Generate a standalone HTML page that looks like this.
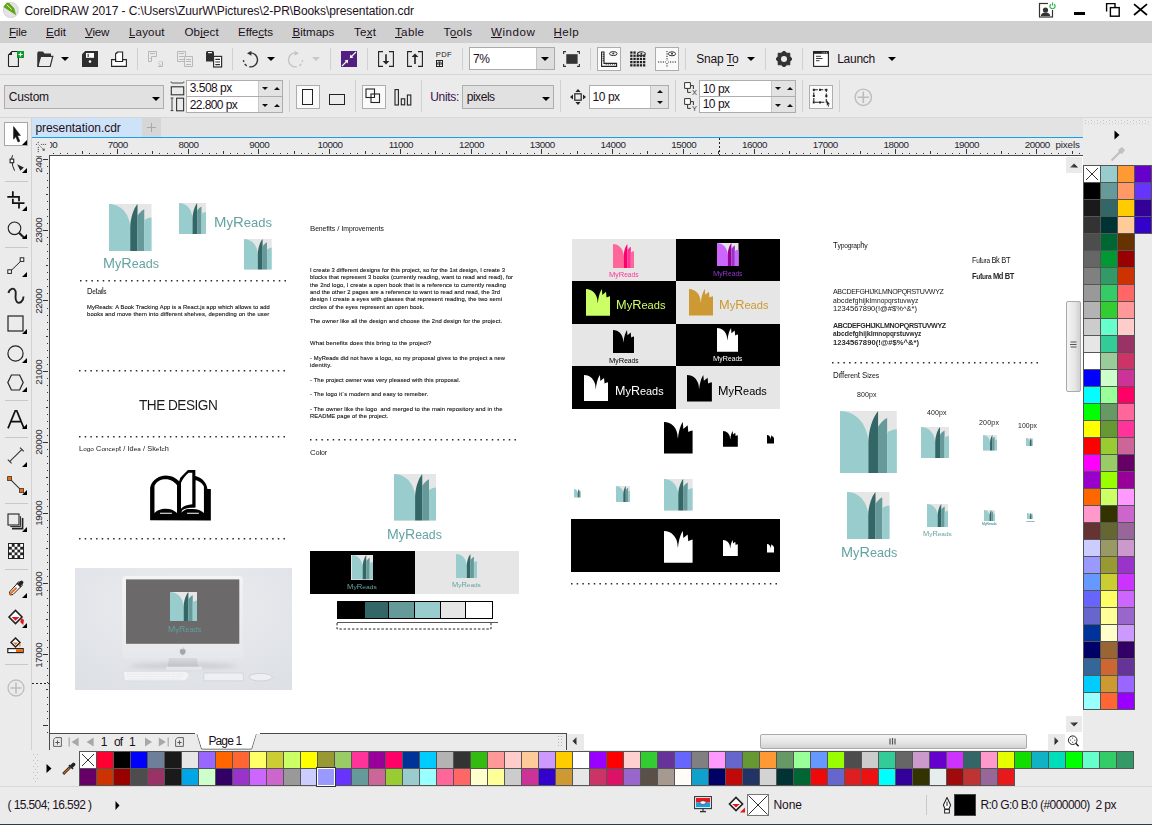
<!DOCTYPE html>
<html><head><meta charset="utf-8"><title>CorelDRAW</title>
<style>
html,body{margin:0;padding:0;}
body{width:1152px;height:825px;position:relative;overflow:hidden;background:#EBEBEB;font-family:"Liberation Sans",sans-serif;}
div,svg{box-sizing:border-box;}
</style></head><body>
<div style="position:absolute;left:0px;top:0px;width:1152px;height:21px;background:#fff;"></div>
<div style="position:absolute;left:0px;top:21px;width:1152px;height:22px;background:#D0D0D0;"></div>
<div style="position:absolute;left:0px;top:43px;width:1152px;height:31px;background:#EBEBEB;"></div>
<div style="position:absolute;left:0px;top:74px;width:1152px;height:1px;background:#D6D6D6;"></div>
<div style="position:absolute;left:0px;top:75px;width:1152px;height:42px;background:#EBEBEB;"></div>
<div style="position:absolute;left:0px;top:117px;width:1152px;height:1px;background:#D6D6D6;"></div>
<div style="position:absolute;left:0px;top:118px;width:31px;height:632px;background:#EBEBEB;"></div>
<div style="position:absolute;left:31px;top:118px;width:1px;height:668px;background:#D2D2D2;"></div>
<div style="position:absolute;left:32px;top:118px;width:1051px;height:19px;background:#E3E3E3;"></div>
<div style="position:absolute;left:32px;top:137px;width:1051px;height:1px;background:#12A1EC;"></div>
<div style="position:absolute;left:32px;top:138px;width:1051px;height:17px;background:#EBEBEB;"></div>
<div style="position:absolute;left:32px;top:155px;width:17px;height:595px;background:#EBEBEB;"></div>
<div style="position:absolute;left:49px;top:155px;width:1034px;height:1px;background:#4A4A4A;"></div>
<div style="position:absolute;left:49px;top:155px;width:1px;height:595px;background:#4A4A4A;"></div>
<div style="position:absolute;left:50px;top:156px;width:1033px;height:577px;background:#FFFFFF;"></div>
<div style="position:absolute;left:49px;top:733px;width:518px;height:1px;background:#4A4A4A;"></div>
<div style="position:absolute;left:567px;top:733px;width:516px;height:17px;background:#FFFFFF;"></div>
<div style="position:absolute;left:566px;top:733px;width:1px;height:17px;background:#4A4A4A;"></div>
<div style="position:absolute;left:50px;top:734px;width:516px;height:16px;background:#EBEBEB;"></div>
<div style="position:absolute;left:1083px;top:118px;width:69px;height:632px;background:#EBEBEB;"></div>
<div style="position:absolute;left:32px;top:750px;width:1120px;height:1px;background:#D8D8D8;"></div>
<div style="position:absolute;left:0px;top:750px;width:1152px;height:36px;background:#EBEBEB;"></div>
<div style="position:absolute;left:0px;top:786px;width:1152px;height:1px;background:#D8D8D8;"></div>
<div style="position:absolute;left:0px;top:787px;width:1152px;height:37px;background:#EBEBEB;"></div>
<div style="position:absolute;left:0px;top:824px;width:1152px;height:1px;background:#2F3B46;"></div>
<svg style="position:absolute;left:2px;top:1px;" width="18" height="18" viewBox="0 0 18 18"><circle cx="8.9" cy="9.1" r="8" fill="#D6D6D8"/><circle cx="8.9" cy="9.1" r="6.8" fill="#E4E4E6"/>
<path d="M1.3,6 L4.9,1.4 L7.2,2 L12.2,7.2 L14.2,14.2 L8.4,10.4 Z" fill="#62A514"/><path d="M4.8,3.8 L9.8,8.6" stroke="#F0F5E8" stroke-width="0.9"/></svg>
<div style="position:absolute;left:24.50px;top:4.75px;font-size:12px;line-height:1;white-space:pre;color:#1c1020;letter-spacing:-0.082px;">CorelDRAW 2017 - C:\Users\ZuurW\Pictures\2-PR\Books\presentation.cdr</div>
<svg style="position:absolute;left:1038px;top:2px;" width="18" height="17" viewBox="0 0 18 17"><rect x="1.5" y="1.5" width="13" height="13.5" fill="none" stroke="#333" stroke-width="1.2"/>
<rect x="10" y="0" width="8" height="8" fill="#fff"/>
<circle cx="7.5" cy="8" r="2.6" fill="#333"/><path d="M2.8,14 Q3,10.6 7.5,10.4 Q12,10.6 12.2,14 Z" fill="#333"/>
<path d="M12.8,2.2 A2.6,2.6 0 1 0 16.2,2.2" fill="none" stroke="#2DB04A" stroke-width="1.2"/><path d="M14.5,0.4 V3.6" stroke="#2DB04A" stroke-width="1.2"/></svg>
<div style="position:absolute;left:1074px;top:12px;width:11px;height:3px;background:#000;"></div>
<svg style="position:absolute;left:1104px;top:2px;" width="18" height="16" viewBox="0 0 18 16"><path d="M2.6,9.6 V1.6 H11 V5.5" fill="none" stroke="#000" stroke-width="1.4"/><rect x="6.4" y="5.6" width="8.8" height="8.6" fill="none" stroke="#000" stroke-width="1.4"/></svg>
<svg style="position:absolute;left:1132px;top:3px;" width="17" height="13" viewBox="0 0 17 13"><path d="M2,1.2 L15,12 M15,1.2 L2,12" stroke="#000" stroke-width="1.7"/></svg>
<div style="position:absolute;left:9.00px;top:26.19px;font-size:11.6px;line-height:1;white-space:pre;color:#1c1020;letter-spacing:-0.231px;">File</div>
<div style="position:absolute;left:9px;top:37px;width:7px;height:1px;background:#1c1020;"></div>
<div style="position:absolute;left:46.00px;top:26.19px;font-size:11.6px;line-height:1;white-space:pre;color:#1c1020;letter-spacing:0.004px;">Edit</div>
<div style="position:absolute;left:46px;top:37px;width:8px;height:1px;background:#1c1020;"></div>
<div style="position:absolute;left:85.00px;top:26.19px;font-size:11.6px;line-height:1;white-space:pre;color:#1c1020;letter-spacing:-0.145px;">View</div>
<div style="position:absolute;left:85px;top:37px;width:8px;height:1px;background:#1c1020;"></div>
<div style="position:absolute;left:129.00px;top:26.19px;font-size:11.6px;line-height:1;white-space:pre;color:#1c1020;letter-spacing:0.134px;">Layout</div>
<div style="position:absolute;left:129px;top:37px;width:6px;height:1px;background:#1c1020;"></div>
<div style="position:absolute;left:184.40px;top:26.19px;font-size:11.6px;line-height:1;white-space:pre;color:#1c1020;letter-spacing:0.175px;">Object</div>
<div style="position:absolute;left:200px;top:37px;width:5px;height:1px;background:#1c1020;"></div>
<div style="position:absolute;left:238.00px;top:26.19px;font-size:11.6px;line-height:1;white-space:pre;color:#1c1020;letter-spacing:-0.041px;">Effects</div>
<div style="position:absolute;left:258px;top:37px;width:6px;height:1px;background:#1c1020;"></div>
<div style="position:absolute;left:292.40px;top:26.19px;font-size:11.6px;line-height:1;white-space:pre;color:#1c1020;letter-spacing:0.016px;">Bitmaps</div>
<div style="position:absolute;left:292px;top:37px;width:8px;height:1px;background:#1c1020;"></div>
<div style="position:absolute;left:354.00px;top:26.19px;font-size:11.6px;line-height:1;white-space:pre;color:#1c1020;letter-spacing:0.242px;">Text</div>
<div style="position:absolute;left:366px;top:37px;width:6px;height:1px;background:#1c1020;"></div>
<div style="position:absolute;left:395.00px;top:26.19px;font-size:11.6px;line-height:1;white-space:pre;color:#1c1020;letter-spacing:0.317px;">Table</div>
<div style="position:absolute;left:395px;top:37px;width:7px;height:1px;background:#1c1020;"></div>
<div style="position:absolute;left:443.50px;top:26.19px;font-size:11.6px;line-height:1;white-space:pre;color:#1c1020;letter-spacing:0.355px;">Tools</div>
<div style="position:absolute;left:451px;top:37px;width:6px;height:1px;background:#1c1020;"></div>
<div style="position:absolute;left:491.00px;top:26.19px;font-size:11.6px;line-height:1;white-space:pre;color:#1c1020;letter-spacing:0.548px;">Window</div>
<div style="position:absolute;left:491px;top:37px;width:11px;height:1px;background:#1c1020;"></div>
<div style="position:absolute;left:553.60px;top:26.19px;font-size:11.6px;line-height:1;white-space:pre;color:#1c1020;letter-spacing:0.381px;">Help</div>
<div style="position:absolute;left:554px;top:37px;width:8px;height:1px;background:#1c1020;"></div>
<svg style="position:absolute;left:7px;top:50px;" width="18" height="18" viewBox="0 0 18 18"><path d="M1.5,16.5 V5 L5,1.5 H10.5" fill="none" stroke="#222" stroke-width="1.1"/>
<path d="M1.5,5 L5,1.5 V5 Z" fill="#222"/><path d="M11.4,8 V16.5 H1.5" fill="none" stroke="#222" stroke-width="1.1"/>
<rect x="10" y="1" width="7" height="7" fill="#0A9A2C"/><path d="M13.5,2.4 V6.6 M11.4,4.5 H15.6" stroke="#fff" stroke-width="1.2"/></svg>
<svg style="position:absolute;left:37px;top:51px;" width="17" height="16" viewBox="0 0 17 16"><path d="M0.5,15.5 V1.5 Q0.5,0.5 1.5,0.5 H6 L7.5,2.5 H14 V5 H4 Z" fill="#333"/>
<path d="M0.5,15.5 V2 H2 V15.5 Z" fill="#333"/>
<path d="M3.6,5.4 H15.8 L13.2,15.5 H0.8 Z" fill="none" stroke="#333" stroke-width="1.2"/></svg>
<svg style="position:absolute;left:61px;top:57px;" width="8" height="4" viewBox="0 0 8 4"><path d="M0,0 H8 L4.0,4 Z" fill="#000"/></svg>
<svg style="position:absolute;left:82px;top:51px;" width="16" height="16" viewBox="0 0 16 16"><path d="M0,3.2 L3.2,0 H16 V16 H0 Z" fill="#2E2E2E"/><rect x="4" y="2" width="8" height="4.8" fill="#fff"/>
<rect x="5.6" y="2.8" width="1.1" height="3.2" fill="#2E2E2E"/><circle cx="8" cy="10.6" r="1.3" fill="#fff"/></svg>
<svg style="position:absolute;left:111px;top:51px;" width="16" height="16" viewBox="0 0 16 16"><path d="M4.6,10.5 V2.8 L6.4,1 H11.6 V10.5" fill="#fff" stroke="#222" stroke-width="1.1"/>
<path d="M4.6,2.8 L6.4,1 V2.8 Z" fill="#222"/>
<path d="M0.6,8.6 H4.6 V10.5 H11.6 V8.6 H15.4 V15.4 H0.6 Z" fill="#fff" stroke="#222" stroke-width="1.1"/></svg>
<div style="position:absolute;left:137px;top:48px;width:1px;height:22px;background:#D0D0D0;"></div>
<svg style="position:absolute;left:147px;top:51px;" width="18" height="17" viewBox="0 0 18 17"><path d="M1.5,0.5 H9.5 V5.5 H4.5 V10.5 H1.5 Z" fill="none" stroke="#B8B8B8" stroke-width="1"/>
<path d="M3,2.5 H8 M3,7.5 H4" stroke="#B8B8B8" stroke-width="1"/>
<path d="M11.5,10.5 H12.5 M13.5,10.5 H14.5 M15.5,10.5 V15.5 H11 M11.5,12.5 H12.5 M12,14 H14" fill="none" stroke="#B8B8B8" stroke-width="1"/></svg>
<svg style="position:absolute;left:177px;top:51px;" width="17" height="17" viewBox="0 0 17 17"><path d="M0.5,0.5 H8.5 V10.5 H0.5 Z" fill="none" stroke="#B8B8B8" stroke-width="1"/>
<path d="M2,2.5 H7 M2,5.5 H7 M2,8.5 H7" stroke="#B8B8B8" stroke-width="1"/>
<path d="M7.5,5.5 H15.5 V15.5 H7.5 Z" fill="#EBEBEB" stroke="#B8B8B8" stroke-width="1"/>
<path d="M9,8.5 H14 M9,10.5 H14 M9,13.5 H14" stroke="#B8B8B8" stroke-width="1"/></svg>
<svg style="position:absolute;left:206px;top:51px;" width="17" height="17" viewBox="0 0 17 17"><path d="M0,1.5 Q0,0 1.5,0 H6.5 Q8,0 8,1.5 V10.6 H0 Z" fill="#2E2E2E"/><rect x="2" y="1" width="4" height="1.2" fill="#fff"/>
<rect x="7.6" y="5.4" width="8" height="10.6" fill="#fff" stroke="#2E2E2E" stroke-width="1.2"/>
<path d="M9.3,8.4 H14 M9.3,11 H14 M9.3,13.6 H14" stroke="#2E2E2E" stroke-width="1.1"/></svg>
<div style="position:absolute;left:232px;top:48px;width:1px;height:22px;background:#D0D0D0;"></div>
<svg style="position:absolute;left:241px;top:51px;" width="18" height="17" viewBox="0 0 18 17"><path d="M9.74,1.90 A7.0,7.0 0 1 1 8.28,15.79 M5.79,14.84 A7.0,7.0 0 0 1 3.77,12.92 M2.84,11.06 A7.0,7.0 0 0 1 2.50,9.14" fill="none" stroke="#333" stroke-width="1.4"/><path d="M6,2.2 L10.4,-0.2 V4.8 Z" fill="#333"/></svg>
<svg style="position:absolute;left:267px;top:57px;" width="8" height="4" viewBox="0 0 8 4"><path d="M0,0 H8 L4.0,4 Z" fill="#000"/></svg>
<svg style="position:absolute;left:287px;top:51px;" width="18" height="17" viewBox="0 0 18 17"><path d="M8.26,1.90 A7.0,7.0 0 1 0 9.72,15.79 M12.21,14.84 A7.0,7.0 0 0 0 14.23,12.92 M15.16,11.06 A7.0,7.0 0 0 0 15.50,9.14" fill="none" stroke="#C4C4C4" stroke-width="1.4"/><path d="M12,2.2 L7.6,-0.2 V4.8 Z" fill="#C4C4C4"/></svg>
<svg style="position:absolute;left:312px;top:57px;" width="8" height="4" viewBox="0 0 8 4"><path d="M0,0 H8 L4.0,4 Z" fill="#C8C8C8"/></svg>
<div style="position:absolute;left:330px;top:48px;width:1px;height:22px;background:#D0D0D0;"></div>
<svg style="position:absolute;left:341px;top:51px;" width="16" height="16" viewBox="0 0 16 16"><rect width="16" height="16" fill="#521E80"/><path d="M1,15 L6.4,9.6 M15,1 L9.6,6.4" stroke="#fff" stroke-width="1.2"/>
<path d="M7.2,8.8 L3.6,9.4 L6.6,12.4 Z M8.8,7.2 L12.4,6.6 L9.4,3.6 Z" fill="#fff"/></svg>
<div style="position:absolute;left:367px;top:48px;width:1px;height:22px;background:#D0D0D0;"></div>
<svg style="position:absolute;left:378px;top:51px;" width="16" height="16" viewBox="0 0 16 16"><path d="M5,0.6 H0.6 V15.4 H5 M11,0.6 H15.4 V15.4 H11" fill="none" stroke="#222" stroke-width="1.1"/><path d="M8,3.2 V11" stroke="#222" stroke-width="1.6"/><path d="M4.6,10 H11.4 L8,13.6 Z" fill="#222"/></svg>
<svg style="position:absolute;left:407px;top:51px;" width="16" height="16" viewBox="0 0 16 16"><path d="M5,0.6 H0.6 V15.4 H5 M11,0.6 H15.4 V15.4 H11" fill="none" stroke="#222" stroke-width="1.1"/><path d="M8,5 V13" stroke="#222" stroke-width="1.6"/><path d="M4.6,6 H11.4 L8,2.4 Z" fill="#222"/></svg>
<div style="position:absolute;left:435.80px;top:51.37px;font-size:7.6px;line-height:1;white-space:pre;color:#222;letter-spacing:0.300px;">PDF</div>
<svg style="position:absolute;left:436px;top:60px;" width="7" height="7" viewBox="0 0 7 7"><rect x="0.5" y="0.5" width="6" height="6" fill="none" stroke="#222" stroke-width="1"/><path d="M1,3.5 L3.5,1.2 L6,3.5 M3.5,2 V6.5 M0.5,4 H6.5" stroke="#222" stroke-width="0.9" fill="none"/></svg>
<div style="position:absolute;left:462px;top:48px;width:1px;height:22px;background:#D0D0D0;"></div>
<div style="position:absolute;left:469px;top:47px;width:86px;height:23px;background:#fff;border:1px solid #ABABAB;"></div>
<div style="position:absolute;left:536px;top:48px;width:18px;height:21px;background:#DEDEDE;border-left:1px solid #C4C4C4;"></div>
<svg style="position:absolute;left:541px;top:57px;" width="8" height="4" viewBox="0 0 8 4"><path d="M0,0 H8 L4.0,4 Z" fill="#000"/></svg>
<div style="position:absolute;left:473.00px;top:52.85px;font-size:12px;line-height:1;white-space:pre;color:#1c1020;letter-spacing:-0.344px;">7%</div>
<svg style="position:absolute;left:563px;top:51px;" width="17" height="16" viewBox="0 0 17 16"><path d="M0.6,3 V0.6 H3 M14,0.6 H16.4 V3 M16.4,13 V15.4 H14 M3,15.4 H0.6 V13" fill="none" stroke="#333" stroke-width="1.1"/>
<rect x="3.3" y="3.2" width="11.3" height="9.6" fill="#333"/></svg>
<div style="position:absolute;left:590px;top:48px;width:1px;height:22px;background:#D0D0D0;"></div>
<div style="position:absolute;left:597px;top:47px;width:24px;height:24px;background:#FAFAFA;border:1px solid #ADADAD;"></div>
<svg style="position:absolute;left:601px;top:51px;" width="17" height="16" viewBox="0 0 17 16"><path d="M0.6,1 H3 V12.4 H15.6 V15.4 H0.6 Z" fill="none" stroke="#222" stroke-width="1.1"/>
<path d="M3,3.5 H1.6 M3,5.6 H1.6 M3,7.7 H1.6 M3,9.8 H1.6 M5.2,12.4 V13.8 M7.3,12.4 V13.8 M9.4,12.4 V13.8 M11.5,12.4 V13.8 M13.6,12.4 V13.8" stroke="#222" stroke-width="0.8"/>
<ellipse cx="12.3" cy="2.6" rx="3.8" ry="2" fill="none" stroke="#333" stroke-width="1"/><circle cx="12.3" cy="2.6" r="1" fill="#333"/></svg>
<svg style="position:absolute;left:630px;top:51px;" width="17" height="16" viewBox="0 0 17 16"><g fill="#222"><rect x="0.2" y="0.4" width="2.3" height="2.3"/><rect x="3.4" y="0.4" width="2.3" height="2.3"/><rect x="0.2" y="3.6" width="2.3" height="2.3"/><rect x="3.4" y="3.6" width="2.3" height="2.3"/><rect x="6.6" y="3.6" width="2.3" height="2.3"/><rect x="9.8" y="3.6" width="2.3" height="2.3"/><rect x="13.0" y="3.6" width="2.3" height="2.3"/><rect x="0.2" y="6.8" width="2.3" height="2.3"/><rect x="3.4" y="6.8" width="2.3" height="2.3"/><rect x="6.6" y="6.8" width="2.3" height="2.3"/><rect x="9.8" y="6.8" width="2.3" height="2.3"/><rect x="13.0" y="6.8" width="2.3" height="2.3"/><rect x="0.2" y="10.0" width="2.3" height="2.3"/><rect x="3.4" y="10.0" width="2.3" height="2.3"/><rect x="6.6" y="10.0" width="2.3" height="2.3"/><rect x="9.8" y="10.0" width="2.3" height="2.3"/><rect x="13.0" y="10.0" width="2.3" height="2.3"/><rect x="0.2" y="13.2" width="2.3" height="2.3"/><rect x="3.4" y="13.2" width="2.3" height="2.3"/><rect x="6.6" y="13.2" width="2.3" height="2.3"/><rect x="9.8" y="13.2" width="2.3" height="2.3"/><rect x="13.0" y="13.2" width="2.3" height="2.3"/></g>
<ellipse cx="11.4" cy="2.8" rx="3.9" ry="2" fill="none" stroke="#333" stroke-width="1.1"/><circle cx="11.4" cy="2.8" r="1" fill="#333"/></svg>
<div style="position:absolute;left:655px;top:47px;width:24px;height:24px;background:#FAFAFA;border:1px solid #ADADAD;"></div>
<svg style="position:absolute;left:658px;top:51px;" width="18" height="16" viewBox="0 0 18 16"><path d="M9,0 V16" stroke="#222" stroke-width="1" stroke-dasharray="1.2,1.2"/><path d="M0,11 H18" stroke="#222" stroke-width="1" stroke-dasharray="1.2,1.2"/>
<rect x="8" y="10" width="2" height="2" fill="#fff"/>
<ellipse cx="14" cy="2.8" rx="3.6" ry="2" fill="#fff" stroke="#333" stroke-width="1"/><circle cx="14" cy="2.8" r="1" fill="#333"/></svg>
<div style="position:absolute;left:685px;top:48px;width:1px;height:22px;background:#D0D0D0;"></div>
<div style="position:absolute;left:696.30px;top:52.85px;font-size:12px;line-height:1;white-space:pre;color:#1c1020;letter-spacing:-0.220px;">Snap To</div>
<div style="position:absolute;left:727px;top:65px;width:7px;height:1px;background:#1c1020;"></div>
<svg style="position:absolute;left:747px;top:57px;" width="8" height="4" viewBox="0 0 8 4"><path d="M0,0 H8 L4.0,4 Z" fill="#000"/></svg>
<div style="position:absolute;left:765px;top:48px;width:1px;height:22px;background:#D0D0D0;"></div>
<svg style="position:absolute;left:776px;top:51px;" width="16" height="16" viewBox="0 0 16 16"><polygon points="8.00,0.00 10.37,2.27 13.66,2.34 13.73,5.63 16.00,8.00 13.73,10.37 13.66,13.66 10.37,13.73 8.00,16.00 5.63,13.73 2.34,13.66 2.27,10.37 0.00,8.00 2.27,5.63 2.34,2.34 5.63,2.27" fill="#333" stroke="#333" stroke-width="1.2" stroke-linejoin="round"/><circle cx="8" cy="8" r="3" fill="#EBEBEB"/></svg>
<div style="position:absolute;left:802px;top:48px;width:1px;height:22px;background:#D0D0D0;"></div>
<svg style="position:absolute;left:813px;top:51px;" width="16" height="16" viewBox="0 0 16 16"><rect x="0.6" y="0.6" width="14.8" height="14.8" fill="#fff" stroke="#222" stroke-width="1.1"/><rect x="0.6" y="0.6" width="14.8" height="2.2" fill="#222"/>
<circle cx="10" cy="1.7" r="0.5" fill="#fff"/><circle cx="11.8" cy="1.7" r="0.5" fill="#fff"/><circle cx="13.6" cy="1.7" r="0.5" fill="#fff"/>
<path d="M3,5.3 H8 M3,7.5 H9.5 M3,9.7 H6.5" stroke="#222" stroke-width="0.9"/></svg>
<div style="position:absolute;left:837.20px;top:52.65px;font-size:12px;line-height:1;white-space:pre;color:#1c1020;letter-spacing:-0.254px;">Launch</div>
<svg style="position:absolute;left:888px;top:57px;" width="8" height="4" viewBox="0 0 8 4"><path d="M0,0 H8 L4.0,4 Z" fill="#000"/></svg>
<div style="position:absolute;left:4px;top:85px;width:160px;height:24px;background:#E1E1E1;border:1px solid #ADADAD;"></div>
<div style="position:absolute;left:8.80px;top:91.15px;font-size:12px;line-height:1;white-space:pre;color:#1c1020;letter-spacing:-0.209px;">Custom</div>
<svg style="position:absolute;left:152px;top:97px;" width="8" height="4" viewBox="0 0 8 4"><path d="M0,0 H8 L4.0,4 Z" fill="#000"/></svg>
<svg style="position:absolute;left:170px;top:81px;" width="15" height="31" viewBox="0 0 15 31"><path d="M1.8,2 H13.2" stroke="#333" stroke-width="0.9"/><path d="M1.2,2 V0.6 M13.8,2 V0.6" stroke="#333" stroke-width="0.9"/>
<rect x="1.3" y="5.8" width="12.4" height="8" fill="none" stroke="#333" stroke-width="1.1"/>
<path d="M2,17 V29.6" stroke="#333" stroke-width="0.9"/><path d="M0.6,17 H3.4 M0.6,29.6 H3.4" stroke="#333" stroke-width="0.9"/>
<rect x="6.6" y="17.2" width="7" height="12.6" fill="none" stroke="#333" stroke-width="1.1"/></svg>
<div style="position:absolute;left:186px;top:80px;width:97px;height:33px;background:#fff;border:1px solid #ADADAD;"></div>
<div style="position:absolute;left:258px;top:81px;width:24px;height:31px;background:#E3E3E3;border-left:1px solid #C8C8C8;"></div>
<div style="position:absolute;left:186px;top:96px;width:97px;height:1px;background:#ADADAD;"></div>
<div style="position:absolute;left:189.70px;top:82.45px;font-size:12px;line-height:1;white-space:pre;color:#1c1020;letter-spacing:-0.491px;">3.508 px</div>
<div style="position:absolute;left:189.70px;top:98.55px;font-size:12px;line-height:1;white-space:pre;color:#1c1020;letter-spacing:-0.576px;">22.800 px</div>
<svg style="position:absolute;left:262px;top:87px;" width="6" height="3" viewBox="0 0 6 3"><path d="M0,0 H6 L3,3 Z" fill="#111"/></svg>
<svg style="position:absolute;left:274px;top:87px;" width="6" height="3" viewBox="0 0 6 3"><path d="M0,3 H6 L3,0 Z" fill="#111"/></svg>
<svg style="position:absolute;left:262px;top:104px;" width="6" height="3" viewBox="0 0 6 3"><path d="M0,0 H6 L3,3 Z" fill="#111"/></svg>
<svg style="position:absolute;left:274px;top:104px;" width="6" height="3" viewBox="0 0 6 3"><path d="M0,3 H6 L3,0 Z" fill="#111"/></svg>
<div style="position:absolute;left:289px;top:80px;width:1px;height:32px;background:#D0D0D0;"></div>
<div style="position:absolute;left:296px;top:85px;width:24px;height:24px;background:#FAFAFA;border:1px solid #ADADAD;"></div>
<div style="position:absolute;left:302px;top:89px;width:11px;height:16px;background:none;border:1.2px solid #222;"></div>
<div style="position:absolute;left:329px;top:94px;width:16px;height:11px;background:none;border:1.2px solid #222;"></div>
<div style="position:absolute;left:355px;top:80px;width:1px;height:32px;background:#D0D0D0;"></div>
<div style="position:absolute;left:362px;top:85px;width:24px;height:24px;background:#FAFAFA;border:1px solid #ADADAD;"></div>
<svg style="position:absolute;left:365px;top:88px;" width="17" height="17" viewBox="0 0 17 17"><rect x="1" y="1" width="8.5" height="8.5" fill="none" stroke="#222" stroke-width="1.1"/><rect x="6" y="6" width="8.5" height="8.5" fill="#FAFAFA" stroke="#222" stroke-width="1.1"/>
<path d="M9.5,6 V9.5 H6" fill="none" stroke="#222" stroke-width="1.1"/></svg>
<svg style="position:absolute;left:394px;top:89px;" width="18" height="17" viewBox="0 0 18 17"><rect x="1" y="0.6" width="3.4" height="15.4" fill="none" stroke="#222" stroke-width="1.1"/><rect x="7.3" y="9.8" width="3.4" height="6" fill="none" stroke="#222" stroke-width="1.1"/><rect x="13.4" y="6" width="3.4" height="10" fill="none" stroke="#222" stroke-width="1.1"/></svg>
<div style="position:absolute;left:421px;top:80px;width:1px;height:32px;background:#D0D0D0;"></div>
<div style="position:absolute;left:430.20px;top:90.65px;font-size:12px;line-height:1;white-space:pre;color:#3a1050;letter-spacing:-0.295px;">Units:</div>
<div style="position:absolute;left:462px;top:85px;width:92px;height:24px;background:#E1E1E1;border:1px solid #ADADAD;"></div>
<div style="position:absolute;left:466.70px;top:90.65px;font-size:12px;line-height:1;white-space:pre;color:#1c1020;letter-spacing:-0.456px;">pixels</div>
<svg style="position:absolute;left:542px;top:97px;" width="8" height="4" viewBox="0 0 8 4"><path d="M0,0 H8 L4.0,4 Z" fill="#000"/></svg>
<div style="position:absolute;left:560px;top:80px;width:1px;height:32px;background:#D0D0D0;"></div>
<svg style="position:absolute;left:570px;top:89px;" width="16" height="16" viewBox="0 0 16 16"><path d="M8,0 L10.6,3 H5.4 Z M8,16 L10.6,13 H5.4 Z M0,8 L3,5.4 V10.6 Z M16,8 L13,5.4 V10.6 Z" fill="#222"/>
<rect x="4.8" y="4.8" width="6.4" height="6.4" fill="none" stroke="#222" stroke-width="1.2"/></svg>
<div style="position:absolute;left:589px;top:85px;width:80px;height:24px;background:#fff;border:1px solid #ADADAD;"></div>
<div style="position:absolute;left:650px;top:86px;width:18px;height:22px;background:#E3E3E3;border-left:1px solid #C8C8C8;"></div>
<div style="position:absolute;left:592.60px;top:90.85px;font-size:12px;line-height:1;white-space:pre;color:#1c1020;letter-spacing:-0.464px;">10 px</div>
<svg style="position:absolute;left:657px;top:90px;" width="6" height="3" viewBox="0 0 6 3"><path d="M0,3 H6 L3,0 Z" fill="#111"/></svg>
<svg style="position:absolute;left:657px;top:101px;" width="6" height="3" viewBox="0 0 6 3"><path d="M0,0 H6 L3,3 Z" fill="#111"/></svg>
<div style="position:absolute;left:675px;top:80px;width:1px;height:32px;background:#D0D0D0;"></div>
<svg style="position:absolute;left:684px;top:82px;" width="14" height="14" viewBox="0 0 14 14"><path d="M0.6,0.6 H6.4 V6.4 H0.6 Z" fill="#fff" stroke="#333" stroke-width="1"/><path d="M6.4,3.6 H9.4 V7 M3.6,6.4 V10.4 H6.8" fill="none" stroke="#333" stroke-width="1"/></svg>
<div style="position:absolute;left:692.00px;top:88.86px;font-size:7.5px;line-height:1;white-space:pre;color:#333;">X</div>
<svg style="position:absolute;left:684px;top:98px;" width="14" height="14" viewBox="0 0 14 14"><path d="M0.6,0.6 H6.4 V6.4 H0.6 Z" fill="#fff" stroke="#333" stroke-width="1"/><path d="M6.4,3.6 H9.4 V7 M3.6,6.4 V10.4 H6.8" fill="none" stroke="#333" stroke-width="1"/></svg>
<div style="position:absolute;left:692.00px;top:104.86px;font-size:7.5px;line-height:1;white-space:pre;color:#333;">Y</div>
<div style="position:absolute;left:699px;top:80px;width:97px;height:33px;background:#fff;border:1px solid #ADADAD;"></div>
<div style="position:absolute;left:771px;top:81px;width:24px;height:31px;background:#E3E3E3;border-left:1px solid #C8C8C8;"></div>
<div style="position:absolute;left:699px;top:96px;width:97px;height:1px;background:#ADADAD;"></div>
<div style="position:absolute;left:702.70px;top:82.65px;font-size:12px;line-height:1;white-space:pre;color:#1c1020;letter-spacing:-0.489px;">10 px</div>
<div style="position:absolute;left:702.70px;top:98.45px;font-size:12px;line-height:1;white-space:pre;color:#1c1020;letter-spacing:-0.489px;">10 px</div>
<svg style="position:absolute;left:775px;top:87px;" width="6" height="3" viewBox="0 0 6 3"><path d="M0,0 H6 L3,3 Z" fill="#111"/></svg>
<svg style="position:absolute;left:787px;top:87px;" width="6" height="3" viewBox="0 0 6 3"><path d="M0,3 H6 L3,0 Z" fill="#111"/></svg>
<svg style="position:absolute;left:775px;top:104px;" width="6" height="3" viewBox="0 0 6 3"><path d="M0,0 H6 L3,3 Z" fill="#111"/></svg>
<svg style="position:absolute;left:787px;top:104px;" width="6" height="3" viewBox="0 0 6 3"><path d="M0,3 H6 L3,0 Z" fill="#111"/></svg>
<div style="position:absolute;left:802px;top:80px;width:1px;height:32px;background:#D0D0D0;"></div>
<div style="position:absolute;left:809px;top:85px;width:24px;height:24px;background:#FAFAFA;border:1px solid #ADADAD;"></div>
<svg style="position:absolute;left:812px;top:88px;" width="18" height="19" viewBox="0 0 18 19"><rect x="1.8" y="1.8" width="12.5" height="12.5" fill="none" stroke="#222" stroke-width="1.1" stroke-dasharray="4,1.4"/>
<g fill="#222"><rect x="0.8" y="0.8" width="2" height="2"/><rect x="7" y="0.8" width="2" height="2"/><rect x="13.4" y="0.8" width="2" height="2"/><rect x="0.8" y="7" width="2" height="2"/><rect x="13.4" y="7" width="2" height="2"/><rect x="0.8" y="13.4" width="2" height="2"/><rect x="7" y="13.4" width="2" height="2"/></g>
<path d="M14.8,12.4 L18,16.2 L16.4,16.2 L17,18.4 L16,18.6 L15.4,16.6 L14.8,17.6 Z" fill="#222"/></svg>
<div style="position:absolute;left:839px;top:80px;width:1px;height:32px;background:#D0D0D0;"></div>
<svg style="position:absolute;left:854px;top:88px;" width="19" height="19" viewBox="0 0 19 19"><circle cx="9.3" cy="9.3" r="8.2" fill="none" stroke="#BDBDBD" stroke-width="1.4"/><path d="M9.3,3.6 V15 M3.6,9.3 H15" stroke="#BDBDBD" stroke-width="1.6"/></svg>
<div style="position:absolute;left:32px;top:118px;width:110px;height:19px;background:#CFE3F8;"></div>
<div style="position:absolute;left:35.40px;top:121.65px;font-size:12px;line-height:1;white-space:pre;color:#1c1020;letter-spacing:-0.044px;">presentation.cdr</div>
<div style="position:absolute;left:142px;top:118px;width:19px;height:19px;background:#D6D6D6;"></div>
<div style="position:absolute;left:151px;top:123px;width:1px;height:9px;background:#A8A8A8;"></div>
<div style="position:absolute;left:147px;top:127px;width:9px;height:1px;background:#A8A8A8;"></div>
<div style="position:absolute;left:53px;top:153px;width:1px;height:1px;background:#333;"></div>
<div style="position:absolute;left:60px;top:153px;width:1px;height:1px;background:#333;"></div>
<div style="position:absolute;left:67px;top:153px;width:1px;height:1px;background:#333;"></div>
<div style="position:absolute;left:75px;top:153px;width:1px;height:1px;background:#333;"></div>
<div style="position:absolute;left:82px;top:151px;width:1px;height:3px;background:#333;"></div>
<div style="position:absolute;left:89px;top:153px;width:1px;height:1px;background:#333;"></div>
<div style="position:absolute;left:96px;top:153px;width:1px;height:1px;background:#333;"></div>
<div style="position:absolute;left:103px;top:153px;width:1px;height:1px;background:#333;"></div>
<div style="position:absolute;left:110px;top:153px;width:1px;height:1px;background:#333;"></div>
<div style="position:absolute;left:117px;top:149px;width:1px;height:5px;background:#333;"></div>
<div style="position:absolute;left:124px;top:153px;width:1px;height:1px;background:#333;"></div>
<div style="position:absolute;left:131px;top:153px;width:1px;height:1px;background:#333;"></div>
<div style="position:absolute;left:138px;top:153px;width:1px;height:1px;background:#333;"></div>
<div style="position:absolute;left:145px;top:153px;width:1px;height:1px;background:#333;"></div>
<div style="position:absolute;left:152px;top:151px;width:1px;height:3px;background:#333;"></div>
<div style="position:absolute;left:159px;top:153px;width:1px;height:1px;background:#333;"></div>
<div style="position:absolute;left:167px;top:153px;width:1px;height:1px;background:#333;"></div>
<div style="position:absolute;left:174px;top:153px;width:1px;height:1px;background:#333;"></div>
<div style="position:absolute;left:181px;top:153px;width:1px;height:1px;background:#333;"></div>
<div style="position:absolute;left:188px;top:149px;width:1px;height:5px;background:#333;"></div>
<div style="position:absolute;left:195px;top:153px;width:1px;height:1px;background:#333;"></div>
<div style="position:absolute;left:202px;top:153px;width:1px;height:1px;background:#333;"></div>
<div style="position:absolute;left:209px;top:153px;width:1px;height:1px;background:#333;"></div>
<div style="position:absolute;left:216px;top:153px;width:1px;height:1px;background:#333;"></div>
<div style="position:absolute;left:223px;top:151px;width:1px;height:3px;background:#333;"></div>
<div style="position:absolute;left:230px;top:153px;width:1px;height:1px;background:#333;"></div>
<div style="position:absolute;left:237px;top:153px;width:1px;height:1px;background:#333;"></div>
<div style="position:absolute;left:244px;top:153px;width:1px;height:1px;background:#333;"></div>
<div style="position:absolute;left:251px;top:153px;width:1px;height:1px;background:#333;"></div>
<div style="position:absolute;left:258px;top:149px;width:1px;height:5px;background:#333;"></div>
<div style="position:absolute;left:266px;top:153px;width:1px;height:1px;background:#333;"></div>
<div style="position:absolute;left:273px;top:153px;width:1px;height:1px;background:#333;"></div>
<div style="position:absolute;left:280px;top:153px;width:1px;height:1px;background:#333;"></div>
<div style="position:absolute;left:287px;top:153px;width:1px;height:1px;background:#333;"></div>
<div style="position:absolute;left:294px;top:151px;width:1px;height:3px;background:#333;"></div>
<div style="position:absolute;left:301px;top:153px;width:1px;height:1px;background:#333;"></div>
<div style="position:absolute;left:308px;top:153px;width:1px;height:1px;background:#333;"></div>
<div style="position:absolute;left:315px;top:153px;width:1px;height:1px;background:#333;"></div>
<div style="position:absolute;left:322px;top:153px;width:1px;height:1px;background:#333;"></div>
<div style="position:absolute;left:329px;top:149px;width:1px;height:5px;background:#333;"></div>
<div style="position:absolute;left:336px;top:153px;width:1px;height:1px;background:#333;"></div>
<div style="position:absolute;left:343px;top:153px;width:1px;height:1px;background:#333;"></div>
<div style="position:absolute;left:350px;top:153px;width:1px;height:1px;background:#333;"></div>
<div style="position:absolute;left:357px;top:153px;width:1px;height:1px;background:#333;"></div>
<div style="position:absolute;left:365px;top:151px;width:1px;height:3px;background:#333;"></div>
<div style="position:absolute;left:372px;top:153px;width:1px;height:1px;background:#333;"></div>
<div style="position:absolute;left:379px;top:153px;width:1px;height:1px;background:#333;"></div>
<div style="position:absolute;left:386px;top:153px;width:1px;height:1px;background:#333;"></div>
<div style="position:absolute;left:393px;top:153px;width:1px;height:1px;background:#333;"></div>
<div style="position:absolute;left:400px;top:149px;width:1px;height:5px;background:#333;"></div>
<div style="position:absolute;left:407px;top:153px;width:1px;height:1px;background:#333;"></div>
<div style="position:absolute;left:414px;top:153px;width:1px;height:1px;background:#333;"></div>
<div style="position:absolute;left:421px;top:153px;width:1px;height:1px;background:#333;"></div>
<div style="position:absolute;left:428px;top:153px;width:1px;height:1px;background:#333;"></div>
<div style="position:absolute;left:435px;top:151px;width:1px;height:3px;background:#333;"></div>
<div style="position:absolute;left:442px;top:153px;width:1px;height:1px;background:#333;"></div>
<div style="position:absolute;left:449px;top:153px;width:1px;height:1px;background:#333;"></div>
<div style="position:absolute;left:457px;top:153px;width:1px;height:1px;background:#333;"></div>
<div style="position:absolute;left:464px;top:153px;width:1px;height:1px;background:#333;"></div>
<div style="position:absolute;left:471px;top:149px;width:1px;height:5px;background:#333;"></div>
<div style="position:absolute;left:478px;top:153px;width:1px;height:1px;background:#333;"></div>
<div style="position:absolute;left:485px;top:153px;width:1px;height:1px;background:#333;"></div>
<div style="position:absolute;left:492px;top:153px;width:1px;height:1px;background:#333;"></div>
<div style="position:absolute;left:499px;top:153px;width:1px;height:1px;background:#333;"></div>
<div style="position:absolute;left:506px;top:151px;width:1px;height:3px;background:#333;"></div>
<div style="position:absolute;left:513px;top:153px;width:1px;height:1px;background:#333;"></div>
<div style="position:absolute;left:520px;top:153px;width:1px;height:1px;background:#333;"></div>
<div style="position:absolute;left:527px;top:153px;width:1px;height:1px;background:#333;"></div>
<div style="position:absolute;left:534px;top:153px;width:1px;height:1px;background:#333;"></div>
<div style="position:absolute;left:541px;top:149px;width:1px;height:5px;background:#333;"></div>
<div style="position:absolute;left:548px;top:153px;width:1px;height:1px;background:#333;"></div>
<div style="position:absolute;left:556px;top:153px;width:1px;height:1px;background:#333;"></div>
<div style="position:absolute;left:563px;top:153px;width:1px;height:1px;background:#333;"></div>
<div style="position:absolute;left:570px;top:153px;width:1px;height:1px;background:#333;"></div>
<div style="position:absolute;left:577px;top:151px;width:1px;height:3px;background:#333;"></div>
<div style="position:absolute;left:584px;top:153px;width:1px;height:1px;background:#333;"></div>
<div style="position:absolute;left:591px;top:153px;width:1px;height:1px;background:#333;"></div>
<div style="position:absolute;left:598px;top:153px;width:1px;height:1px;background:#333;"></div>
<div style="position:absolute;left:605px;top:153px;width:1px;height:1px;background:#333;"></div>
<div style="position:absolute;left:612px;top:149px;width:1px;height:5px;background:#333;"></div>
<div style="position:absolute;left:619px;top:153px;width:1px;height:1px;background:#333;"></div>
<div style="position:absolute;left:626px;top:153px;width:1px;height:1px;background:#333;"></div>
<div style="position:absolute;left:633px;top:153px;width:1px;height:1px;background:#333;"></div>
<div style="position:absolute;left:640px;top:153px;width:1px;height:1px;background:#333;"></div>
<div style="position:absolute;left:647px;top:151px;width:1px;height:3px;background:#333;"></div>
<div style="position:absolute;left:655px;top:153px;width:1px;height:1px;background:#333;"></div>
<div style="position:absolute;left:662px;top:153px;width:1px;height:1px;background:#333;"></div>
<div style="position:absolute;left:669px;top:153px;width:1px;height:1px;background:#333;"></div>
<div style="position:absolute;left:676px;top:153px;width:1px;height:1px;background:#333;"></div>
<div style="position:absolute;left:683px;top:149px;width:1px;height:5px;background:#333;"></div>
<div style="position:absolute;left:690px;top:153px;width:1px;height:1px;background:#333;"></div>
<div style="position:absolute;left:697px;top:153px;width:1px;height:1px;background:#333;"></div>
<div style="position:absolute;left:704px;top:153px;width:1px;height:1px;background:#333;"></div>
<div style="position:absolute;left:711px;top:153px;width:1px;height:1px;background:#333;"></div>
<div style="position:absolute;left:718px;top:151px;width:1px;height:3px;background:#333;"></div>
<div style="position:absolute;left:725px;top:153px;width:1px;height:1px;background:#333;"></div>
<div style="position:absolute;left:732px;top:153px;width:1px;height:1px;background:#333;"></div>
<div style="position:absolute;left:739px;top:153px;width:1px;height:1px;background:#333;"></div>
<div style="position:absolute;left:746px;top:153px;width:1px;height:1px;background:#333;"></div>
<div style="position:absolute;left:754px;top:149px;width:1px;height:5px;background:#333;"></div>
<div style="position:absolute;left:761px;top:153px;width:1px;height:1px;background:#333;"></div>
<div style="position:absolute;left:768px;top:153px;width:1px;height:1px;background:#333;"></div>
<div style="position:absolute;left:775px;top:153px;width:1px;height:1px;background:#333;"></div>
<div style="position:absolute;left:782px;top:153px;width:1px;height:1px;background:#333;"></div>
<div style="position:absolute;left:789px;top:151px;width:1px;height:3px;background:#333;"></div>
<div style="position:absolute;left:796px;top:153px;width:1px;height:1px;background:#333;"></div>
<div style="position:absolute;left:803px;top:153px;width:1px;height:1px;background:#333;"></div>
<div style="position:absolute;left:810px;top:153px;width:1px;height:1px;background:#333;"></div>
<div style="position:absolute;left:817px;top:153px;width:1px;height:1px;background:#333;"></div>
<div style="position:absolute;left:824px;top:149px;width:1px;height:5px;background:#333;"></div>
<div style="position:absolute;left:831px;top:153px;width:1px;height:1px;background:#333;"></div>
<div style="position:absolute;left:838px;top:153px;width:1px;height:1px;background:#333;"></div>
<div style="position:absolute;left:846px;top:153px;width:1px;height:1px;background:#333;"></div>
<div style="position:absolute;left:853px;top:153px;width:1px;height:1px;background:#333;"></div>
<div style="position:absolute;left:860px;top:151px;width:1px;height:3px;background:#333;"></div>
<div style="position:absolute;left:867px;top:153px;width:1px;height:1px;background:#333;"></div>
<div style="position:absolute;left:874px;top:153px;width:1px;height:1px;background:#333;"></div>
<div style="position:absolute;left:881px;top:153px;width:1px;height:1px;background:#333;"></div>
<div style="position:absolute;left:888px;top:153px;width:1px;height:1px;background:#333;"></div>
<div style="position:absolute;left:895px;top:149px;width:1px;height:5px;background:#333;"></div>
<div style="position:absolute;left:902px;top:153px;width:1px;height:1px;background:#333;"></div>
<div style="position:absolute;left:909px;top:153px;width:1px;height:1px;background:#333;"></div>
<div style="position:absolute;left:916px;top:153px;width:1px;height:1px;background:#333;"></div>
<div style="position:absolute;left:923px;top:153px;width:1px;height:1px;background:#333;"></div>
<div style="position:absolute;left:930px;top:151px;width:1px;height:3px;background:#333;"></div>
<div style="position:absolute;left:937px;top:153px;width:1px;height:1px;background:#333;"></div>
<div style="position:absolute;left:945px;top:153px;width:1px;height:1px;background:#333;"></div>
<div style="position:absolute;left:952px;top:153px;width:1px;height:1px;background:#333;"></div>
<div style="position:absolute;left:959px;top:153px;width:1px;height:1px;background:#333;"></div>
<div style="position:absolute;left:966px;top:149px;width:1px;height:5px;background:#333;"></div>
<div style="position:absolute;left:973px;top:153px;width:1px;height:1px;background:#333;"></div>
<div style="position:absolute;left:980px;top:153px;width:1px;height:1px;background:#333;"></div>
<div style="position:absolute;left:987px;top:153px;width:1px;height:1px;background:#333;"></div>
<div style="position:absolute;left:994px;top:153px;width:1px;height:1px;background:#333;"></div>
<div style="position:absolute;left:1001px;top:151px;width:1px;height:3px;background:#333;"></div>
<div style="position:absolute;left:1008px;top:153px;width:1px;height:1px;background:#333;"></div>
<div style="position:absolute;left:1015px;top:153px;width:1px;height:1px;background:#333;"></div>
<div style="position:absolute;left:1022px;top:153px;width:1px;height:1px;background:#333;"></div>
<div style="position:absolute;left:1029px;top:153px;width:1px;height:1px;background:#333;"></div>
<div style="position:absolute;left:1036px;top:149px;width:1px;height:5px;background:#333;"></div>
<div style="position:absolute;left:1044px;top:153px;width:1px;height:1px;background:#333;"></div>
<div style="position:absolute;left:1051px;top:153px;width:1px;height:1px;background:#333;"></div>
<div style="position:absolute;left:1058px;top:153px;width:1px;height:1px;background:#333;"></div>
<div style="position:absolute;left:1065px;top:153px;width:1px;height:1px;background:#333;"></div>
<div style="position:absolute;left:1072px;top:151px;width:1px;height:3px;background:#333;"></div>
<div style="position:absolute;left:1079px;top:153px;width:1px;height:1px;background:#333;"></div>
<div style="position:absolute;left:50px;top:138px;width:1033px;height:17px;overflow:hidden;"><div style="position:absolute;left:-12.86px;top:1.71px;font-size:9.8px;line-height:1;letter-spacing:-0.45px;color:#23272E;">6000</div><div style="position:absolute;left:57.87px;top:1.71px;font-size:9.8px;line-height:1;letter-spacing:-0.45px;color:#23272E;">7000</div><div style="position:absolute;left:128.60px;top:1.71px;font-size:9.8px;line-height:1;letter-spacing:-0.45px;color:#23272E;">8000</div><div style="position:absolute;left:199.33px;top:1.71px;font-size:9.8px;line-height:1;letter-spacing:-0.45px;color:#23272E;">9000</div><div style="position:absolute;left:267.56px;top:1.71px;font-size:9.8px;line-height:1;letter-spacing:-0.45px;color:#23272E;">10000</div><div style="position:absolute;left:338.66px;top:1.71px;font-size:9.8px;line-height:1;letter-spacing:-0.45px;color:#23272E;">11000</div><div style="position:absolute;left:409.02px;top:1.71px;font-size:9.8px;line-height:1;letter-spacing:-0.45px;color:#23272E;">12000</div><div style="position:absolute;left:479.75px;top:1.71px;font-size:9.8px;line-height:1;letter-spacing:-0.45px;color:#23272E;">13000</div><div style="position:absolute;left:550.48px;top:1.71px;font-size:9.8px;line-height:1;letter-spacing:-0.45px;color:#23272E;">14000</div><div style="position:absolute;left:621.21px;top:1.71px;font-size:9.8px;line-height:1;letter-spacing:-0.45px;color:#23272E;">15000</div><div style="position:absolute;left:691.94px;top:1.71px;font-size:9.8px;line-height:1;letter-spacing:-0.45px;color:#23272E;">16000</div><div style="position:absolute;left:762.67px;top:1.71px;font-size:9.8px;line-height:1;letter-spacing:-0.45px;color:#23272E;">17000</div><div style="position:absolute;left:833.40px;top:1.71px;font-size:9.8px;line-height:1;letter-spacing:-0.45px;color:#23272E;">18000</div><div style="position:absolute;left:904.13px;top:1.71px;font-size:9.8px;line-height:1;letter-spacing:-0.45px;color:#23272E;">19000</div><div style="position:absolute;left:974.86px;top:1.71px;font-size:9.8px;line-height:1;letter-spacing:-0.45px;color:#23272E;">20000</div><div style="position:absolute;left:1005.40px;top:1.71px;font-size:9.8px;line-height:1;color:#23272E;letter-spacing:-0.1px;">pixels</div></div>
<svg style="position:absolute;left:719px;top:138px;" width="1" height="17" viewBox="0 0 1 17"><path d="M0.5,0 V17" stroke="#222" stroke-width="1" stroke-dasharray="2,2"/></svg>
<div style="position:absolute;left:43px;top:159px;width:5px;height:1px;background:#333;"></div>
<div style="position:absolute;left:47px;top:166px;width:1px;height:1px;background:#333;"></div>
<div style="position:absolute;left:47px;top:173px;width:1px;height:1px;background:#333;"></div>
<div style="position:absolute;left:47px;top:180px;width:1px;height:1px;background:#333;"></div>
<div style="position:absolute;left:47px;top:187px;width:1px;height:1px;background:#333;"></div>
<div style="position:absolute;left:46px;top:194px;width:2px;height:1px;background:#333;"></div>
<div style="position:absolute;left:47px;top:201px;width:1px;height:1px;background:#333;"></div>
<div style="position:absolute;left:47px;top:209px;width:1px;height:1px;background:#333;"></div>
<div style="position:absolute;left:47px;top:216px;width:1px;height:1px;background:#333;"></div>
<div style="position:absolute;left:47px;top:223px;width:1px;height:1px;background:#333;"></div>
<div style="position:absolute;left:43px;top:230px;width:5px;height:1px;background:#333;"></div>
<div style="position:absolute;left:47px;top:237px;width:1px;height:1px;background:#333;"></div>
<div style="position:absolute;left:47px;top:244px;width:1px;height:1px;background:#333;"></div>
<div style="position:absolute;left:47px;top:251px;width:1px;height:1px;background:#333;"></div>
<div style="position:absolute;left:47px;top:258px;width:1px;height:1px;background:#333;"></div>
<div style="position:absolute;left:46px;top:265px;width:2px;height:1px;background:#333;"></div>
<div style="position:absolute;left:47px;top:272px;width:1px;height:1px;background:#333;"></div>
<div style="position:absolute;left:47px;top:279px;width:1px;height:1px;background:#333;"></div>
<div style="position:absolute;left:47px;top:286px;width:1px;height:1px;background:#333;"></div>
<div style="position:absolute;left:47px;top:293px;width:1px;height:1px;background:#333;"></div>
<div style="position:absolute;left:43px;top:300px;width:5px;height:1px;background:#333;"></div>
<div style="position:absolute;left:47px;top:308px;width:1px;height:1px;background:#333;"></div>
<div style="position:absolute;left:47px;top:315px;width:1px;height:1px;background:#333;"></div>
<div style="position:absolute;left:47px;top:322px;width:1px;height:1px;background:#333;"></div>
<div style="position:absolute;left:47px;top:329px;width:1px;height:1px;background:#333;"></div>
<div style="position:absolute;left:46px;top:336px;width:2px;height:1px;background:#333;"></div>
<div style="position:absolute;left:47px;top:343px;width:1px;height:1px;background:#333;"></div>
<div style="position:absolute;left:47px;top:350px;width:1px;height:1px;background:#333;"></div>
<div style="position:absolute;left:47px;top:357px;width:1px;height:1px;background:#333;"></div>
<div style="position:absolute;left:47px;top:364px;width:1px;height:1px;background:#333;"></div>
<div style="position:absolute;left:43px;top:371px;width:5px;height:1px;background:#333;"></div>
<div style="position:absolute;left:47px;top:378px;width:1px;height:1px;background:#333;"></div>
<div style="position:absolute;left:47px;top:385px;width:1px;height:1px;background:#333;"></div>
<div style="position:absolute;left:47px;top:392px;width:1px;height:1px;background:#333;"></div>
<div style="position:absolute;left:47px;top:400px;width:1px;height:1px;background:#333;"></div>
<div style="position:absolute;left:46px;top:407px;width:2px;height:1px;background:#333;"></div>
<div style="position:absolute;left:47px;top:414px;width:1px;height:1px;background:#333;"></div>
<div style="position:absolute;left:47px;top:421px;width:1px;height:1px;background:#333;"></div>
<div style="position:absolute;left:47px;top:428px;width:1px;height:1px;background:#333;"></div>
<div style="position:absolute;left:47px;top:435px;width:1px;height:1px;background:#333;"></div>
<div style="position:absolute;left:43px;top:442px;width:5px;height:1px;background:#333;"></div>
<div style="position:absolute;left:47px;top:449px;width:1px;height:1px;background:#333;"></div>
<div style="position:absolute;left:47px;top:456px;width:1px;height:1px;background:#333;"></div>
<div style="position:absolute;left:47px;top:463px;width:1px;height:1px;background:#333;"></div>
<div style="position:absolute;left:47px;top:470px;width:1px;height:1px;background:#333;"></div>
<div style="position:absolute;left:46px;top:477px;width:2px;height:1px;background:#333;"></div>
<div style="position:absolute;left:47px;top:484px;width:1px;height:1px;background:#333;"></div>
<div style="position:absolute;left:47px;top:491px;width:1px;height:1px;background:#333;"></div>
<div style="position:absolute;left:47px;top:499px;width:1px;height:1px;background:#333;"></div>
<div style="position:absolute;left:47px;top:506px;width:1px;height:1px;background:#333;"></div>
<div style="position:absolute;left:43px;top:513px;width:5px;height:1px;background:#333;"></div>
<div style="position:absolute;left:47px;top:520px;width:1px;height:1px;background:#333;"></div>
<div style="position:absolute;left:47px;top:527px;width:1px;height:1px;background:#333;"></div>
<div style="position:absolute;left:47px;top:534px;width:1px;height:1px;background:#333;"></div>
<div style="position:absolute;left:47px;top:541px;width:1px;height:1px;background:#333;"></div>
<div style="position:absolute;left:46px;top:548px;width:2px;height:1px;background:#333;"></div>
<div style="position:absolute;left:47px;top:555px;width:1px;height:1px;background:#333;"></div>
<div style="position:absolute;left:47px;top:562px;width:1px;height:1px;background:#333;"></div>
<div style="position:absolute;left:47px;top:569px;width:1px;height:1px;background:#333;"></div>
<div style="position:absolute;left:47px;top:576px;width:1px;height:1px;background:#333;"></div>
<div style="position:absolute;left:43px;top:583px;width:5px;height:1px;background:#333;"></div>
<div style="position:absolute;left:47px;top:590px;width:1px;height:1px;background:#333;"></div>
<div style="position:absolute;left:47px;top:598px;width:1px;height:1px;background:#333;"></div>
<div style="position:absolute;left:47px;top:605px;width:1px;height:1px;background:#333;"></div>
<div style="position:absolute;left:47px;top:612px;width:1px;height:1px;background:#333;"></div>
<div style="position:absolute;left:46px;top:619px;width:2px;height:1px;background:#333;"></div>
<div style="position:absolute;left:47px;top:626px;width:1px;height:1px;background:#333;"></div>
<div style="position:absolute;left:47px;top:633px;width:1px;height:1px;background:#333;"></div>
<div style="position:absolute;left:47px;top:640px;width:1px;height:1px;background:#333;"></div>
<div style="position:absolute;left:47px;top:647px;width:1px;height:1px;background:#333;"></div>
<div style="position:absolute;left:43px;top:654px;width:5px;height:1px;background:#333;"></div>
<div style="position:absolute;left:47px;top:661px;width:1px;height:1px;background:#333;"></div>
<div style="position:absolute;left:47px;top:668px;width:1px;height:1px;background:#333;"></div>
<div style="position:absolute;left:47px;top:675px;width:1px;height:1px;background:#333;"></div>
<div style="position:absolute;left:47px;top:682px;width:1px;height:1px;background:#333;"></div>
<div style="position:absolute;left:46px;top:689px;width:2px;height:1px;background:#333;"></div>
<div style="position:absolute;left:47px;top:697px;width:1px;height:1px;background:#333;"></div>
<div style="position:absolute;left:47px;top:704px;width:1px;height:1px;background:#333;"></div>
<div style="position:absolute;left:47px;top:711px;width:1px;height:1px;background:#333;"></div>
<div style="position:absolute;left:47px;top:718px;width:1px;height:1px;background:#333;"></div>
<div style="position:absolute;left:43px;top:725px;width:5px;height:1px;background:#333;"></div>
<div style="position:absolute;left:47px;top:732px;width:1px;height:1px;background:#333;"></div>
<div style="position:absolute;left:32px;top:156px;width:17px;height:594px;overflow:hidden;"><div style="position:absolute;left:-5.93px;top:-72.21px;width:27.45px;height:10px;font-size:9.8px;line-height:10px;letter-spacing:-0.45px;color:#23272E;transform:rotate(-90deg);transform-origin:12.73px 5px;white-space:nowrap;">25000</div><div style="position:absolute;left:-5.93px;top:-1.48px;width:27.45px;height:10px;font-size:9.8px;line-height:10px;letter-spacing:-0.45px;color:#23272E;transform:rotate(-90deg);transform-origin:12.73px 5px;white-space:nowrap;">24000</div><div style="position:absolute;left:-5.93px;top:69.25px;width:27.45px;height:10px;font-size:9.8px;line-height:10px;letter-spacing:-0.45px;color:#23272E;transform:rotate(-90deg);transform-origin:12.73px 5px;white-space:nowrap;">23000</div><div style="position:absolute;left:-5.93px;top:139.98px;width:27.45px;height:10px;font-size:9.8px;line-height:10px;letter-spacing:-0.45px;color:#23272E;transform:rotate(-90deg);transform-origin:12.73px 5px;white-space:nowrap;">22000</div><div style="position:absolute;left:-5.93px;top:210.71px;width:27.45px;height:10px;font-size:9.8px;line-height:10px;letter-spacing:-0.45px;color:#23272E;transform:rotate(-90deg);transform-origin:12.73px 5px;white-space:nowrap;">21000</div><div style="position:absolute;left:-5.93px;top:281.44px;width:27.45px;height:10px;font-size:9.8px;line-height:10px;letter-spacing:-0.45px;color:#23272E;transform:rotate(-90deg);transform-origin:12.73px 5px;white-space:nowrap;">20000</div><div style="position:absolute;left:-5.93px;top:352.17px;width:27.45px;height:10px;font-size:9.8px;line-height:10px;letter-spacing:-0.45px;color:#23272E;transform:rotate(-90deg);transform-origin:12.73px 5px;white-space:nowrap;">19000</div><div style="position:absolute;left:-5.93px;top:422.90px;width:27.45px;height:10px;font-size:9.8px;line-height:10px;letter-spacing:-0.45px;color:#23272E;transform:rotate(-90deg);transform-origin:12.73px 5px;white-space:nowrap;">18000</div><div style="position:absolute;left:-5.93px;top:493.63px;width:27.45px;height:10px;font-size:9.8px;line-height:10px;letter-spacing:-0.45px;color:#23272E;transform:rotate(-90deg);transform-origin:12.73px 5px;white-space:nowrap;">17000</div></div>
<svg style="position:absolute;left:32px;top:683px;" width="17" height="1" viewBox="0 0 17 1"><path d="M0,0.5 H17" stroke="#222" stroke-width="1" stroke-dasharray="2,2"/></svg>
<svg style="position:absolute;left:35px;top:141px;" width="12" height="12" viewBox="0 0 12 12"><g fill="#6A6A6A"><circle cx="1.5" cy="3.4" r="0.7"/><circle cx="6.5" cy="3.4" r="0.7"/><circle cx="8.5" cy="3.4" r="0.7"/><circle cx="10.5" cy="3.4" r="0.7"/>
<circle cx="3.3" cy="1.5" r="0.7"/><circle cx="3.3" cy="6.5" r="0.7"/><circle cx="3.3" cy="8.5" r="0.7"/><circle cx="3.3" cy="10.5" r="0.7"/>
<rect x="7.6" y="7.6" width="2.2" height="2.2"/></g><path d="M3.6,3.6 L8.4,8.4" stroke="#555" stroke-width="0.9" stroke-dasharray="1,0.5"/></svg>
<div style="position:absolute;left:1066px;top:157px;width:16px;height:16px;background:#EAEAEA;"></div>
<svg style="position:absolute;left:1070px;top:163px;" width="8" height="5" viewBox="0 0 8 5"><defs><linearGradient id="gu" x1="0" y1="0" x2="1" y2="0"><stop offset="0" stop-color="#666"/><stop offset="1" stop-color="#111"/></linearGradient></defs><path d="M0,4.5 L4,0.5 L8,4.5 Z" fill="url(#gu)"/></svg>
<div style="position:absolute;left:1066px;top:716px;width:16px;height:16px;background:#EAEAEA;"></div>
<svg style="position:absolute;left:1070px;top:722px;" width="8" height="5" viewBox="0 0 8 5"><defs><linearGradient id="gd" x1="0" y1="0" x2="1" y2="0"><stop offset="0" stop-color="#666"/><stop offset="1" stop-color="#111"/></linearGradient></defs><path d="M0,0.5 L4,4.5 L8,0.5 Z" fill="url(#gd)"/></svg>
<div style="position:absolute;left:1066px;top:301px;width:15px;height:91px;background:linear-gradient(90deg,#F4F4F4,#E6E6E6 60%,#D0D0D0);border:1px solid #AAAAAA;border-radius:2px;"></div>
<svg style="position:absolute;left:1069px;top:340px;" width="9" height="10" viewBox="0 0 9 10"><path d="M1.5,2 H7.5 M1,4.5 H7.5 M1.5,7 H7.5" stroke="#555" stroke-width="1.2"/></svg>
<svg style="position:absolute;left:53px;top:737px;" width="10" height="10" viewBox="0 0 10 10"><path d="M0.6,2.6 L2.6,0.6 H8.4 V9.4 H0.6 Z" fill="none" stroke="#555" stroke-width="0.9"/><path d="M4.5,3.4 V7.6 M2.4,5.5 H6.6" stroke="#555" stroke-width="1"/></svg>
<svg style="position:absolute;left:68px;top:737px;" width="12" height="10" viewBox="0 0 12 10"><rect x="0.6" y="0.5" width="1.2" height="9" fill="#A8A8A8"/><path d="M3.6,5 L10.6,0.5 V9.5 Z" fill="#A8A8A8"/></svg>
<svg style="position:absolute;left:86px;top:737px;" width="9" height="10" viewBox="0 0 9 10"><path d="M0.6,5 L7.6,0.5 V9.5 Z" fill="#A8A8A8"/></svg>
<div style="position:absolute;left:100.80px;top:735.55px;font-size:12px;line-height:1;white-space:pre;color:#1c1020;">1</div>
<div style="position:absolute;left:113.90px;top:735.55px;font-size:12px;line-height:1;white-space:pre;color:#1c1020;letter-spacing:-0.708px;">of</div>
<div style="position:absolute;left:129.00px;top:735.55px;font-size:12px;line-height:1;white-space:pre;color:#1c1020;">1</div>
<svg style="position:absolute;left:144px;top:737px;" width="9" height="10" viewBox="0 0 9 10"><path d="M8,5 L1,0.5 V9.5 Z" fill="#A8A8A8"/></svg>
<svg style="position:absolute;left:158px;top:737px;" width="12" height="10" viewBox="0 0 12 10"><rect x="9.6" y="0.5" width="1.2" height="9" fill="#A8A8A8"/><path d="M7.8,5 L0.8,0.5 V9.5 Z" fill="#A8A8A8"/></svg>
<svg style="position:absolute;left:175px;top:737px;" width="10" height="10" viewBox="0 0 10 10"><path d="M0.6,2.6 L2.6,0.6 H8.4 V9.4 H0.6 Z" fill="none" stroke="#555" stroke-width="0.9"/><path d="M4.5,3.4 V7.6 M2.4,5.5 H6.6" stroke="#555" stroke-width="1"/></svg>
<svg style="position:absolute;left:194px;top:733px;" width="66" height="17" viewBox="0 0 66 17"><path d="M0,0.5 H3 L7.6,16 H57.6 L62.2,0.5 H66" fill="none" stroke="#555" stroke-width="1"/><path d="M3.2,1 L7.8,15.5 H57.4 L62,1 Z" fill="#fff"/></svg>
<div style="position:absolute;left:195px;top:733px;width:67px;height:1px;background:#fff;"></div>
<div style="position:absolute;left:208.40px;top:734.85px;font-size:12px;line-height:1;white-space:pre;color:#1c1020;letter-spacing:-0.847px;">Page 1</div>
<div style="position:absolute;left:49px;top:733px;width:146px;height:1px;background:#4A4A4A;"></div>
<div style="position:absolute;left:260px;top:733px;width:307px;height:1px;background:#4A4A4A;"></div>
<svg style="position:absolute;left:558px;top:736px;" width="6" height="12" viewBox="0 0 6 12"><g fill="#B5B5B5"><rect x="0" y="0" width="1" height="1"/><rect x="3" y="0" width="1" height="1"/><rect x="0" y="3" width="1" height="1"/><rect x="3" y="3" width="1" height="1"/><rect x="0" y="6" width="1" height="1"/><rect x="3" y="6" width="1" height="1"/><rect x="0" y="9" width="1" height="1"/><rect x="3" y="9" width="1" height="1"/></g></svg>
<div style="position:absolute;left:567px;top:734px;width:17px;height:16px;background:#EAEAEA;"></div>
<svg style="position:absolute;left:572px;top:737px;" width="5" height="8" viewBox="0 0 5 8"><defs><linearGradient id="gl" x1="0" y1="0" x2="0" y2="1"><stop offset="0" stop-color="#555"/><stop offset="1" stop-color="#111"/></linearGradient></defs><path d="M4.5,0 L0.5,4 L4.5,8 Z" fill="url(#gl)"/></svg>
<div style="position:absolute;left:760px;top:734px;width:267px;height:15px;background:linear-gradient(180deg,#F4F4F4,#E4E4E4 60%,#D2D2D2);border:1px solid #AAAAAA;border-radius:2px;"></div>
<svg style="position:absolute;left:888px;top:737px;" width="10" height="9" viewBox="0 0 10 9"><path d="M2,1.5 V7.5 M4.5,1 V7.5 M7,1.5 V7.5" stroke="#555" stroke-width="1.2"/></svg>
<div style="position:absolute;left:1048px;top:734px;width:17px;height:16px;background:#EAEAEA;"></div>
<svg style="position:absolute;left:1054px;top:737px;" width="5" height="8" viewBox="0 0 5 8"><defs><linearGradient id="gr" x1="0" y1="0" x2="0" y2="1"><stop offset="0" stop-color="#555"/><stop offset="1" stop-color="#111"/></linearGradient></defs><path d="M0.5,0 L4.5,4 L0.5,8 Z" fill="url(#gr)"/></svg>
<svg style="position:absolute;left:1067px;top:734px;" width="14" height="14" viewBox="0 0 14 14"><circle cx="5.7" cy="6.2" r="4.3" fill="none" stroke="#222" stroke-width="1"/><path d="M8.8,9.3 L11.6,12.2" stroke="#222" stroke-width="1.5"/><g fill="#333"><rect x="5.2" y="3.6" width="1" height="1"/><rect x="5.2" y="7.8" width="1" height="1"/><rect x="3.1" y="5.7" width="1" height="1"/><rect x="7.3" y="5.7" width="1" height="1"/></g></svg>
<div style="position:absolute;left:4px;top:122px;width:24px;height:24px;background:#fff;border:1px solid #A6A6A6;"></div>
<svg style="position:absolute;left:13px;top:126px;" width="8" height="19" viewBox="0 0 8 19"><path d="M0.6,0.6 L7.4,9.4 H4.4 L6.8,15.2 L5,16 L2.8,10.6 L0.6,13.2 Z" fill="#111" stroke="#111" stroke-width="0.6" stroke-linejoin="round"/></svg>
<svg style="position:absolute;left:22px;top:140px;" width="5" height="5" viewBox="0 0 5 5"><path d="M5,0 V5 H0 Z" fill="#000"/></svg>
<svg style="position:absolute;left:8px;top:155px;" width="17" height="19" viewBox="0 0 17 19"><path d="M4.6,0.3 Q3.2,3 3.9,5.9 Q4.3,11.5 6.6,15.7" fill="none" stroke="#222" stroke-width="1"/>
<rect x="2.1" y="4.1" width="3.6" height="3.6" fill="#fff" stroke="#222" stroke-width="1.1"/>
<path d="M9.1,9.2 L15.8,12.5 L12.4,15.7 Z" fill="#222"/></svg>
<svg style="position:absolute;left:22px;top:168px;" width="5" height="5" viewBox="0 0 5 5"><path d="M5,0 V5 H0 Z" fill="#000"/></svg>
<div style="position:absolute;left:5px;top:181px;width:23px;height:1px;background:#C8C8C8;"></div>
<svg style="position:absolute;left:7px;top:190px;" width="18" height="19" viewBox="0 0 18 19"><path d="M5.85,2.2 V6.9 M1.2,6.9 H12 V10.4 M5.85,9.5 V13.1 H16.6 M12,13.1 V17.5" fill="none" stroke="#111" stroke-width="1.75" stroke-linecap="square"/></svg>
<svg style="position:absolute;left:22px;top:206px;" width="5" height="5" viewBox="0 0 5 5"><path d="M5,0 V5 H0 Z" fill="#000"/></svg>
<svg style="position:absolute;left:7px;top:220px;" width="19" height="19" viewBox="0 0 19 19"><circle cx="7.5" cy="8.3" r="6.3" fill="none" stroke="#222" stroke-width="1.1"/><path d="M12,12.8 L17.4,18" stroke="#222" stroke-width="2.2"/></svg>
<svg style="position:absolute;left:22px;top:234px;" width="5" height="5" viewBox="0 0 5 5"><path d="M5,0 V5 H0 Z" fill="#000"/></svg>
<div style="position:absolute;left:5px;top:247px;width:23px;height:1px;background:#C8C8C8;"></div>
<svg style="position:absolute;left:7px;top:257px;" width="18" height="18" viewBox="0 0 18 18"><path d="M2.8,14.8 L15.2,2.8" stroke="#222" stroke-width="1"/><rect x="0.8" y="12.8" width="3.6" height="3.6" fill="#fff" stroke="#222" stroke-width="1"/><rect x="13.2" y="0.8" width="3.6" height="3.6" fill="#fff" stroke="#222" stroke-width="1"/></svg>
<svg style="position:absolute;left:22px;top:272px;" width="5" height="5" viewBox="0 0 5 5"><path d="M5,0 V5 H0 Z" fill="#000"/></svg>
<svg style="position:absolute;left:7px;top:286px;" width="18" height="18" viewBox="0 0 18 18"><path d="M1.4,7 C2.5,2.5 7,1 8.5,5 C9.5,9 7,13 10,16 C12.5,18 16.5,15.5 16.5,10.5" fill="none" stroke="#222" stroke-width="1.9"/></svg>
<svg style="position:absolute;left:7px;top:315px;" width="17" height="17" viewBox="0 0 17 17"><rect x="1" y="1" width="15" height="15" fill="none" stroke="#222" stroke-width="1.2"/></svg>
<svg style="position:absolute;left:22px;top:329px;" width="5" height="5" viewBox="0 0 5 5"><path d="M5,0 V5 H0 Z" fill="#000"/></svg>
<svg style="position:absolute;left:7px;top:345px;" width="17" height="17" viewBox="0 0 17 17"><circle cx="8.5" cy="8.5" r="7.6" fill="none" stroke="#222" stroke-width="1.2"/></svg>
<svg style="position:absolute;left:22px;top:358px;" width="5" height="5" viewBox="0 0 5 5"><path d="M5,0 V5 H0 Z" fill="#000"/></svg>
<svg style="position:absolute;left:7px;top:374px;" width="17" height="17" viewBox="0 0 17 17"><path d="M4.4,1 H12.6 L16.2,8.5 L12.6,16 H4.4 L0.8,8.5 Z" fill="none" stroke="#222" stroke-width="1.2"/></svg>
<svg style="position:absolute;left:22px;top:387px;" width="5" height="5" viewBox="0 0 5 5"><path d="M5,0 V5 H0 Z" fill="#000"/></svg>
<div style="position:absolute;left:5px;top:400px;width:23px;height:1px;background:#C8C8C8;"></div>
<svg style="position:absolute;left:7px;top:410px;" width="18" height="19" viewBox="0 0 18 19"><path d="M1,18.4 L8.3,0.6 H9.7 L17,18.4 M4,11.6 H14" fill="none" stroke="#111" stroke-width="1.7"/></svg>
<svg style="position:absolute;left:22px;top:424px;" width="5" height="5" viewBox="0 0 5 5"><path d="M5,0 V5 H0 Z" fill="#000"/></svg>
<div style="position:absolute;left:5px;top:437px;width:23px;height:1px;background:#C8C8C8;"></div>
<svg style="position:absolute;left:7px;top:447px;" width="18" height="18" viewBox="0 0 18 18"><path d="M2.6,14.6 L15,2.4" stroke="#333" stroke-width="1.1"/><path d="M0.8,12.6 L4.6,16.4 M13,0.6 L16.8,4.4" stroke="#333" stroke-width="1.1"/></svg>
<svg style="position:absolute;left:22px;top:462px;" width="5" height="5" viewBox="0 0 5 5"><path d="M5,0 V5 H0 Z" fill="#000"/></svg>
<svg style="position:absolute;left:7px;top:476px;" width="18" height="18" viewBox="0 0 18 18"><path d="M2.6,2.6 L14.8,14.8" stroke="#333" stroke-width="1.1"/><rect x="0.6" y="0.6" width="4" height="4" fill="#F26B0A" stroke="#333" stroke-width="0.8"/><rect x="12.6" y="12.6" width="4" height="4" fill="#F26B0A" stroke="#333" stroke-width="0.8"/></svg>
<svg style="position:absolute;left:22px;top:490px;" width="5" height="5" viewBox="0 0 5 5"><path d="M5,0 V5 H0 Z" fill="#000"/></svg>
<div style="position:absolute;left:5px;top:503px;width:23px;height:1px;background:#C8C8C8;"></div>
<svg style="position:absolute;left:7px;top:513px;" width="18" height="19" viewBox="0 0 18 19"><path d="M5,15.6 H15.6 V5" fill="none" stroke="#222" stroke-width="1.6"/><path d="M3.2,13.6 H13.6 V3.2" fill="none" stroke="#222" stroke-width="1"/><rect x="1" y="1" width="11" height="11" fill="none" stroke="#222" stroke-width="1.1"/></svg>
<svg style="position:absolute;left:22px;top:527px;" width="5" height="5" viewBox="0 0 5 5"><path d="M5,0 V5 H0 Z" fill="#000"/></svg>
<svg style="position:absolute;left:8px;top:543px;" width="16" height="16" viewBox="0 0 16 16"><rect width="16" height="16" fill="#222"/><rect x="1.0" y="1.0" width="2.8" height="2.8" fill="#fff"/><rect x="6.6" y="1.0" width="2.8" height="2.8" fill="#fff"/><rect x="12.2" y="1.0" width="2.8" height="2.8" fill="#fff"/><rect x="3.8" y="3.8" width="2.8" height="2.8" fill="#fff"/><rect x="9.4" y="3.8" width="2.8" height="2.8" fill="#fff"/><rect x="1.0" y="6.6" width="2.8" height="2.8" fill="#fff"/><rect x="6.6" y="6.6" width="2.8" height="2.8" fill="#fff"/><rect x="12.2" y="6.6" width="2.8" height="2.8" fill="#fff"/><rect x="3.8" y="9.4" width="2.8" height="2.8" fill="#fff"/><rect x="9.4" y="9.4" width="2.8" height="2.8" fill="#fff"/><rect x="1.0" y="12.2" width="2.8" height="2.8" fill="#fff"/><rect x="6.6" y="12.2" width="2.8" height="2.8" fill="#fff"/><rect x="12.2" y="12.2" width="2.8" height="2.8" fill="#fff"/></svg>
<div style="position:absolute;left:5px;top:569px;width:23px;height:1px;background:#C8C8C8;"></div>
<svg style="position:absolute;left:7px;top:579px;" width="18" height="19" viewBox="0 0 18 19"><path d="M12,2.5 L15.5,6 L6,15.5 L3,16 L2.5,13 Z" fill="#fff" stroke="#222" stroke-width="1"/><path d="M2.6,15.6 L9.6,8.6" stroke="#EE6A10" stroke-width="2"/>
<path d="M11,4.5 L13.5,2 Q14.6,1 15.6,2 L16,2.4 Q17,3.4 16,4.5 L13.5,7 Z" fill="#222"/><path d="M10,4 L14,8" stroke="#222" stroke-width="1.6"/></svg>
<svg style="position:absolute;left:22px;top:593px;" width="5" height="5" viewBox="0 0 5 5"><path d="M5,0 V5 H0 Z" fill="#000"/></svg>
<svg style="position:absolute;left:7px;top:609px;" width="20" height="19" viewBox="0 0 20 19"><path d="M2,8 L8.5,1.5 L15,8 L8.5,14.5 Z" fill="#fff" stroke="#222" stroke-width="1.6"/><path d="M4.6,8 H12.4 L8.5,11.8 Z" fill="#E8141E"/><path d="M14.5,9 L17,11 L16.2,16 L13.2,13 Z" fill="#E8141E"/></svg>
<svg style="position:absolute;left:22px;top:623px;" width="5" height="5" viewBox="0 0 5 5"><path d="M5,0 V5 H0 Z" fill="#000"/></svg>
<svg style="position:absolute;left:7px;top:637px;" width="17" height="17" viewBox="0 0 17 17"><path d="M4,5.5 L8.5,1 L13,5.5 L8.5,10 Z" fill="#fff" stroke="#222" stroke-width="1.5"/><path d="M6,5.5 H11 L8.5,8 Z" fill="#EE6A10"/><rect x="12.4" y="6.6" width="1" height="3" fill="#EE6A10"/>
<rect x="0.8" y="11.6" width="15.4" height="4" fill="#fff" stroke="#222" stroke-width="1.2"/><rect x="9" y="12.2" width="6.8" height="2.8" fill="#EE6A10"/></svg>
<div style="position:absolute;left:5px;top:664px;width:23px;height:1px;background:#C8C8C8;"></div>
<svg style="position:absolute;left:7px;top:679px;" width="18" height="18" viewBox="0 0 18 18"><circle cx="9" cy="9" r="8" fill="none" stroke="#BDBDBD" stroke-width="1.3"/><path d="M9,3.4 V14.6 M3.4,9 H14.6" stroke="#BDBDBD" stroke-width="1.6"/></svg>
<svg style="position:absolute;left:1085px;top:120px;" width="66" height="5" viewBox="0 0 66 5"><g fill="#C4C4C4"><rect x="0" y="0.0" width="1" height="1"/><rect x="3" y="1.5" width="1" height="1"/><rect x="6" y="0.0" width="1" height="1"/><rect x="9" y="1.5" width="1" height="1"/><rect x="12" y="0.0" width="1" height="1"/><rect x="15" y="1.5" width="1" height="1"/><rect x="18" y="0.0" width="1" height="1"/><rect x="21" y="1.5" width="1" height="1"/><rect x="24" y="0.0" width="1" height="1"/><rect x="27" y="1.5" width="1" height="1"/><rect x="30" y="0.0" width="1" height="1"/><rect x="33" y="1.5" width="1" height="1"/><rect x="36" y="0.0" width="1" height="1"/><rect x="39" y="1.5" width="1" height="1"/><rect x="42" y="0.0" width="1" height="1"/><rect x="45" y="1.5" width="1" height="1"/><rect x="48" y="0.0" width="1" height="1"/><rect x="51" y="1.5" width="1" height="1"/><rect x="54" y="0.0" width="1" height="1"/><rect x="57" y="1.5" width="1" height="1"/><rect x="60" y="0.0" width="1" height="1"/><rect x="63" y="1.5" width="1" height="1"/><rect x="0" y="3.0" width="1" height="1"/><rect x="3" y="4.5" width="1" height="1"/><rect x="6" y="3.0" width="1" height="1"/><rect x="9" y="4.5" width="1" height="1"/><rect x="12" y="3.0" width="1" height="1"/><rect x="15" y="4.5" width="1" height="1"/><rect x="18" y="3.0" width="1" height="1"/><rect x="21" y="4.5" width="1" height="1"/><rect x="24" y="3.0" width="1" height="1"/><rect x="27" y="4.5" width="1" height="1"/><rect x="30" y="3.0" width="1" height="1"/><rect x="33" y="4.5" width="1" height="1"/><rect x="36" y="3.0" width="1" height="1"/><rect x="39" y="4.5" width="1" height="1"/><rect x="42" y="3.0" width="1" height="1"/><rect x="45" y="4.5" width="1" height="1"/><rect x="48" y="3.0" width="1" height="1"/><rect x="51" y="4.5" width="1" height="1"/><rect x="54" y="3.0" width="1" height="1"/><rect x="57" y="4.5" width="1" height="1"/><rect x="60" y="3.0" width="1" height="1"/><rect x="63" y="4.5" width="1" height="1"/></g></svg>
<svg style="position:absolute;left:1114px;top:130px;" width="6" height="10" viewBox="0 0 6 10"><path d="M0.5,0.5 L5.5,5 L0.5,9.5 Z" fill="#000"/></svg>
<svg style="position:absolute;left:1110px;top:147px;" width="15" height="15" viewBox="0 0 15 15"><path d="M1.5,13.5 L10,5" stroke="#C0C0C0" stroke-width="2.2"/><path d="M9,3 L12,0.8 L14.2,3 L12,6 Z M8.6,4 L11,6.4" fill="#C0C0C0" stroke="#C0C0C0" stroke-width="1.2"/></svg>
<div style="position:absolute;left:1083px;top:165px;width:18px;height:545px;background:#555;"></div>
<div style="position:absolute;left:1084px;top:166px;width:16px;height:16px;"><svg width="16" height="16" style="display:block"><rect width="16" height="16" fill="#fff"/><path d="M2,2 L14,14 M14,2 L2,14" stroke="#333" stroke-width="1"/></svg></div><div style="position:absolute;left:1084px;top:183px;width:16px;height:16px;background:#000000;"></div>
<div style="position:absolute;left:1084px;top:200px;width:16px;height:16px;background:#1A1A1A;"></div>
<div style="position:absolute;left:1084px;top:217px;width:16px;height:16px;background:#333333;"></div>
<div style="position:absolute;left:1084px;top:234px;width:16px;height:16px;background:#4D4D4D;"></div>
<div style="position:absolute;left:1084px;top:251px;width:16px;height:16px;background:#666666;"></div>
<div style="position:absolute;left:1084px;top:268px;width:16px;height:16px;background:#808080;"></div>
<div style="position:absolute;left:1084px;top:285px;width:16px;height:16px;background:#999999;"></div>
<div style="position:absolute;left:1084px;top:302px;width:16px;height:16px;background:#B3B3B3;"></div>
<div style="position:absolute;left:1084px;top:319px;width:16px;height:16px;background:#CCCCCC;"></div>
<div style="position:absolute;left:1084px;top:336px;width:16px;height:16px;background:#E6E6E6;"></div>
<div style="position:absolute;left:1084px;top:353px;width:16px;height:16px;background:#FFFFFF;"></div>
<div style="position:absolute;left:1084px;top:370px;width:16px;height:16px;background:#0000FF;"></div>
<div style="position:absolute;left:1084px;top:387px;width:16px;height:16px;background:#00FFFF;"></div>
<div style="position:absolute;left:1084px;top:404px;width:16px;height:16px;background:#00FF00;"></div>
<div style="position:absolute;left:1084px;top:421px;width:16px;height:16px;background:#FFFF00;"></div>
<div style="position:absolute;left:1084px;top:438px;width:16px;height:16px;background:#FF0000;"></div>
<div style="position:absolute;left:1084px;top:455px;width:16px;height:16px;background:#FF00FF;"></div>
<div style="position:absolute;left:1084px;top:472px;width:16px;height:16px;background:#9900CC;"></div>
<div style="position:absolute;left:1084px;top:489px;width:16px;height:16px;background:#FF6600;"></div>
<div style="position:absolute;left:1084px;top:506px;width:16px;height:16px;background:#FF99CC;"></div>
<div style="position:absolute;left:1084px;top:523px;width:16px;height:16px;background:#663333;"></div>
<div style="position:absolute;left:1084px;top:540px;width:16px;height:16px;background:#CCCCFF;"></div>
<div style="position:absolute;left:1084px;top:557px;width:16px;height:16px;background:#9999FF;"></div>
<div style="position:absolute;left:1084px;top:574px;width:16px;height:16px;background:#6699FF;"></div>
<div style="position:absolute;left:1084px;top:591px;width:16px;height:16px;background:#6666FF;"></div>
<div style="position:absolute;left:1084px;top:608px;width:16px;height:16px;background:#6666CC;"></div>
<div style="position:absolute;left:1084px;top:625px;width:16px;height:16px;background:#003399;"></div>
<div style="position:absolute;left:1084px;top:642px;width:16px;height:16px;background:#000066;"></div>
<div style="position:absolute;left:1084px;top:659px;width:16px;height:16px;background:#336699;"></div>
<div style="position:absolute;left:1084px;top:676px;width:16px;height:16px;background:#00CCFF;"></div>
<div style="position:absolute;left:1084px;top:693px;width:16px;height:16px;background:#99FFFF;"></div>
<div style="position:absolute;left:1100px;top:165px;width:18px;height:545px;background:#555;"></div>
<div style="position:absolute;left:1101px;top:166px;width:16px;height:16px;background:#99CCCC;"></div>
<div style="position:absolute;left:1101px;top:183px;width:16px;height:16px;background:#669999;"></div>
<div style="position:absolute;left:1101px;top:200px;width:16px;height:16px;background:#336666;"></div>
<div style="position:absolute;left:1101px;top:217px;width:16px;height:16px;background:#003333;"></div>
<div style="position:absolute;left:1101px;top:234px;width:16px;height:16px;background:#006633;"></div>
<div style="position:absolute;left:1101px;top:251px;width:16px;height:16px;background:#009933;"></div>
<div style="position:absolute;left:1101px;top:268px;width:16px;height:16px;background:#339966;"></div>
<div style="position:absolute;left:1101px;top:285px;width:16px;height:16px;background:#33CC66;"></div>
<div style="position:absolute;left:1101px;top:302px;width:16px;height:16px;background:#33CC33;"></div>
<div style="position:absolute;left:1101px;top:319px;width:16px;height:16px;background:#66FFCC;"></div>
<div style="position:absolute;left:1101px;top:336px;width:16px;height:16px;background:#33CC99;"></div>
<div style="position:absolute;left:1101px;top:353px;width:16px;height:16px;background:#99CC99;"></div>
<div style="position:absolute;left:1101px;top:370px;width:16px;height:16px;background:#CCFFCC;"></div>
<div style="position:absolute;left:1101px;top:387px;width:16px;height:16px;background:#99FF99;"></div>
<div style="position:absolute;left:1101px;top:404px;width:16px;height:16px;background:#669966;"></div>
<div style="position:absolute;left:1101px;top:421px;width:16px;height:16px;background:#669933;"></div>
<div style="position:absolute;left:1101px;top:438px;width:16px;height:16px;background:#99CC33;"></div>
<div style="position:absolute;left:1101px;top:455px;width:16px;height:16px;background:#99CC66;"></div>
<div style="position:absolute;left:1101px;top:472px;width:16px;height:16px;background:#99FF00;"></div>
<div style="position:absolute;left:1101px;top:489px;width:16px;height:16px;background:#CCFF66;"></div>
<div style="position:absolute;left:1101px;top:506px;width:16px;height:16px;background:#333300;"></div>
<div style="position:absolute;left:1101px;top:523px;width:16px;height:16px;background:#666633;"></div>
<div style="position:absolute;left:1101px;top:540px;width:16px;height:16px;background:#999966;"></div>
<div style="position:absolute;left:1101px;top:557px;width:16px;height:16px;background:#999933;"></div>
<div style="position:absolute;left:1101px;top:574px;width:16px;height:16px;background:#CCCC33;"></div>
<div style="position:absolute;left:1101px;top:591px;width:16px;height:16px;background:#FFFF66;"></div>
<div style="position:absolute;left:1101px;top:608px;width:16px;height:16px;background:#FFFF99;"></div>
<div style="position:absolute;left:1101px;top:625px;width:16px;height:16px;background:#FFFFCC;"></div>
<div style="position:absolute;left:1101px;top:642px;width:16px;height:16px;background:#996633;"></div>
<div style="position:absolute;left:1101px;top:659px;width:16px;height:16px;background:#CC6633;"></div>
<div style="position:absolute;left:1101px;top:676px;width:16px;height:16px;background:#CC9933;"></div>
<div style="position:absolute;left:1101px;top:693px;width:16px;height:16px;background:#FF6633;"></div>
<div style="position:absolute;left:1117px;top:165px;width:18px;height:545px;background:#555;"></div>
<div style="position:absolute;left:1118px;top:166px;width:16px;height:16px;background:#FF9933;"></div>
<div style="position:absolute;left:1118px;top:183px;width:16px;height:16px;background:#FF9966;"></div>
<div style="position:absolute;left:1118px;top:200px;width:16px;height:16px;background:#FFCC00;"></div>
<div style="position:absolute;left:1118px;top:217px;width:16px;height:16px;background:#FFCC99;"></div>
<div style="position:absolute;left:1118px;top:234px;width:16px;height:16px;background:#663300;"></div>
<div style="position:absolute;left:1118px;top:251px;width:16px;height:16px;background:#990000;"></div>
<div style="position:absolute;left:1118px;top:268px;width:16px;height:16px;background:#CC3300;"></div>
<div style="position:absolute;left:1118px;top:285px;width:16px;height:16px;background:#FF6666;"></div>
<div style="position:absolute;left:1118px;top:302px;width:16px;height:16px;background:#FF9999;"></div>
<div style="position:absolute;left:1118px;top:319px;width:16px;height:16px;background:#FFCCCC;"></div>
<div style="position:absolute;left:1118px;top:336px;width:16px;height:16px;background:#993366;"></div>
<div style="position:absolute;left:1118px;top:353px;width:16px;height:16px;background:#CC3366;"></div>
<div style="position:absolute;left:1118px;top:370px;width:16px;height:16px;background:#CC3399;"></div>
<div style="position:absolute;left:1118px;top:387px;width:16px;height:16px;background:#FF0066;"></div>
<div style="position:absolute;left:1118px;top:404px;width:16px;height:16px;background:#FF6699;"></div>
<div style="position:absolute;left:1118px;top:421px;width:16px;height:16px;background:#FF3399;"></div>
<div style="position:absolute;left:1118px;top:438px;width:16px;height:16px;background:#CC6699;"></div>
<div style="position:absolute;left:1118px;top:455px;width:16px;height:16px;background:#660066;"></div>
<div style="position:absolute;left:1118px;top:472px;width:16px;height:16px;background:#990099;"></div>
<div style="position:absolute;left:1118px;top:489px;width:16px;height:16px;background:#FF99FF;"></div>
<div style="position:absolute;left:1118px;top:506px;width:16px;height:16px;background:#CC66CC;"></div>
<div style="position:absolute;left:1118px;top:523px;width:16px;height:16px;background:#996699;"></div>
<div style="position:absolute;left:1118px;top:540px;width:16px;height:16px;background:#CC99CC;"></div>
<div style="position:absolute;left:1118px;top:557px;width:16px;height:16px;background:#9933CC;"></div>
<div style="position:absolute;left:1118px;top:574px;width:16px;height:16px;background:#CC33FF;"></div>
<div style="position:absolute;left:1118px;top:591px;width:16px;height:16px;background:#CC66FF;"></div>
<div style="position:absolute;left:1118px;top:608px;width:16px;height:16px;background:#9966CC;"></div>
<div style="position:absolute;left:1118px;top:625px;width:16px;height:16px;background:#CC99FF;"></div>
<div style="position:absolute;left:1118px;top:642px;width:16px;height:16px;background:#330066;"></div>
<div style="position:absolute;left:1118px;top:659px;width:16px;height:16px;background:#663399;"></div>
<div style="position:absolute;left:1118px;top:676px;width:16px;height:16px;background:#9966FF;"></div>
<div style="position:absolute;left:1118px;top:693px;width:16px;height:16px;background:#9900FF;"></div>
<div style="position:absolute;left:1134px;top:165px;width:18px;height:69px;background:#555;"></div>
<div style="position:absolute;left:1135px;top:166px;width:16px;height:16px;background:#6600CC;"></div>
<div style="position:absolute;left:1135px;top:183px;width:16px;height:16px;background:#6633FF;"></div>
<div style="position:absolute;left:1135px;top:200px;width:16px;height:16px;background:#330099;"></div>
<div style="position:absolute;left:1135px;top:217px;width:16px;height:16px;background:#3300CC;"></div>
<svg style="position:absolute;left:33px;top:754px;" width="6" height="30" viewBox="0 0 6 30"><g fill="#C0C0C0"><rect x="0" y="0" width="1" height="1"/><rect x="4" y="0" width="1" height="1"/><rect x="2" y="3" width="1" height="1"/><rect x="6" y="3" width="1" height="1"/><rect x="0" y="6" width="1" height="1"/><rect x="4" y="6" width="1" height="1"/><rect x="2" y="9" width="1" height="1"/><rect x="6" y="9" width="1" height="1"/><rect x="0" y="12" width="1" height="1"/><rect x="4" y="12" width="1" height="1"/><rect x="2" y="15" width="1" height="1"/><rect x="6" y="15" width="1" height="1"/><rect x="0" y="18" width="1" height="1"/><rect x="4" y="18" width="1" height="1"/><rect x="2" y="21" width="1" height="1"/><rect x="6" y="21" width="1" height="1"/><rect x="0" y="24" width="1" height="1"/><rect x="4" y="24" width="1" height="1"/><rect x="2" y="27" width="1" height="1"/><rect x="6" y="27" width="1" height="1"/></g></svg>
<svg style="position:absolute;left:46px;top:764px;" width="6" height="9" viewBox="0 0 6 9"><path d="M0.5,0 L5.5,4.5 L0.5,9 Z" fill="#000"/></svg>
<svg style="position:absolute;left:62px;top:762px;" width="14" height="13" viewBox="0 0 14 13"><path d="M1.2,12 L8.2,5" stroke="#222" stroke-width="2.6"/><path d="M1.6,11.6 L7.6,5.6" stroke="#EE6A10" stroke-width="1.2"/>
<path d="M8,3.5 L10.5,1 Q11.5,0 12.5,1 L13,1.5 Q14,2.5 13,3.5 L10.5,6 Z" fill="#222"/><path d="M7,3 L11,7" stroke="#222" stroke-width="1.6"/></svg>
<div style="position:absolute;left:79px;top:751px;width:1055px;height:18px;background:#555;"></div>
<div style="position:absolute;left:79px;top:768px;width:936px;height:18px;background:#555;"></div>
<div style="position:absolute;left:80px;top:752px;width:16px;height:16px;"><svg width="16" height="16" style="display:block"><rect width="16" height="16" fill="#fff"/><path d="M2,2 L14,14 M14,2 L2,14" stroke="#333" stroke-width="1"/></svg></div><div style="position:absolute;left:97px;top:752px;width:16px;height:16px;background:#FF0033;"></div>
<div style="position:absolute;left:114px;top:752px;width:16px;height:16px;background:#000000;"></div>
<div style="position:absolute;left:131px;top:752px;width:16px;height:16px;background:#0000FF;"></div>
<div style="position:absolute;left:148px;top:752px;width:16px;height:16px;background:#6E7F99;"></div>
<div style="position:absolute;left:165px;top:752px;width:16px;height:16px;background:#1A1A1A;"></div>
<div style="position:absolute;left:182px;top:752px;width:16px;height:16px;background:#E6E6E6;"></div>
<div style="position:absolute;left:199px;top:752px;width:16px;height:16px;background:#9966FF;"></div>
<div style="position:absolute;left:216px;top:752px;width:16px;height:16px;background:#FF6600;"></div>
<div style="position:absolute;left:233px;top:752px;width:16px;height:16px;background:#FF6633;"></div>
<div style="position:absolute;left:250px;top:752px;width:16px;height:16px;background:#FFFF66;"></div>
<div style="position:absolute;left:267px;top:752px;width:16px;height:16px;background:#CCCC33;"></div>
<div style="position:absolute;left:284px;top:752px;width:16px;height:16px;background:#CCFF66;"></div>
<div style="position:absolute;left:301px;top:752px;width:16px;height:16px;background:#FFFF00;"></div>
<div style="position:absolute;left:318px;top:752px;width:16px;height:16px;background:#999933;"></div>
<div style="position:absolute;left:335px;top:752px;width:16px;height:16px;background:#99CC66;"></div>
<div style="position:absolute;left:352px;top:752px;width:16px;height:16px;background:#FF3399;"></div>
<div style="position:absolute;left:369px;top:752px;width:16px;height:16px;background:#990099;"></div>
<div style="position:absolute;left:386px;top:752px;width:16px;height:16px;background:#FF0066;"></div>
<div style="position:absolute;left:403px;top:752px;width:16px;height:16px;background:#003399;"></div>
<div style="position:absolute;left:420px;top:752px;width:16px;height:16px;background:#00CCFF;"></div>
<div style="position:absolute;left:437px;top:752px;width:16px;height:16px;background:#B3B3B3;"></div>
<div style="position:absolute;left:454px;top:752px;width:16px;height:16px;background:#333333;"></div>
<div style="position:absolute;left:471px;top:752px;width:16px;height:16px;background:#33BB11;"></div>
<div style="position:absolute;left:488px;top:752px;width:16px;height:16px;background:#FF9999;"></div>
<div style="position:absolute;left:505px;top:752px;width:16px;height:16px;background:#FFCCCC;"></div>
<div style="position:absolute;left:522px;top:752px;width:16px;height:16px;background:#FFCC99;"></div>
<div style="position:absolute;left:539px;top:752px;width:16px;height:16px;background:#CC99FF;"></div>
<div style="position:absolute;left:556px;top:752px;width:16px;height:16px;background:#FFCC00;"></div>
<div style="position:absolute;left:573px;top:752px;width:16px;height:16px;background:#FFFFFF;"></div>
<div style="position:absolute;left:590px;top:752px;width:16px;height:16px;background:#9900FF;"></div>
<div style="position:absolute;left:607px;top:752px;width:16px;height:16px;background:#FF0000;"></div>
<div style="position:absolute;left:624px;top:752px;width:16px;height:16px;background:#FFD0D0;"></div>
<div style="position:absolute;left:641px;top:752px;width:16px;height:16px;background:#33CC33;"></div>
<div style="position:absolute;left:658px;top:752px;width:16px;height:16px;background:#663399;"></div>
<div style="position:absolute;left:675px;top:752px;width:16px;height:16px;background:#6666FF;"></div>
<div style="position:absolute;left:692px;top:752px;width:16px;height:16px;background:#808080;"></div>
<div style="position:absolute;left:709px;top:752px;width:16px;height:16px;background:#FF99FF;"></div>
<div style="position:absolute;left:726px;top:752px;width:16px;height:16px;background:#6666CC;"></div>
<div style="position:absolute;left:743px;top:752px;width:16px;height:16px;background:#669933;"></div>
<div style="position:absolute;left:760px;top:752px;width:16px;height:16px;background:#FF9933;"></div>
<div style="position:absolute;left:777px;top:752px;width:16px;height:16px;background:#669966;"></div>
<div style="position:absolute;left:794px;top:752px;width:16px;height:16px;background:#99FF99;"></div>
<div style="position:absolute;left:811px;top:752px;width:16px;height:16px;background:#6699FF;"></div>
<div style="position:absolute;left:828px;top:752px;width:16px;height:16px;background:#99FF00;"></div>
<div style="position:absolute;left:845px;top:752px;width:16px;height:16px;background:#4D4D4D;"></div>
<div style="position:absolute;left:862px;top:752px;width:16px;height:16px;background:#CCCCCC;"></div>
<div style="position:absolute;left:879px;top:752px;width:16px;height:16px;background:#33CC99;"></div>
<div style="position:absolute;left:896px;top:752px;width:16px;height:16px;background:#666666;"></div>
<div style="position:absolute;left:913px;top:752px;width:16px;height:16px;background:#CC99CC;"></div>
<div style="position:absolute;left:930px;top:752px;width:16px;height:16px;background:#6600CC;"></div>
<div style="position:absolute;left:947px;top:752px;width:16px;height:16px;background:#CC33FF;"></div>
<div style="position:absolute;left:964px;top:752px;width:16px;height:16px;background:#336666;"></div>
<div style="position:absolute;left:981px;top:752px;width:16px;height:16px;background:#FF99CC;"></div>
<div style="position:absolute;left:998px;top:752px;width:16px;height:16px;background:#E5FF00;"></div>
<div style="position:absolute;left:1015px;top:752px;width:16px;height:16px;background:#11DD00;"></div>
<div style="position:absolute;left:1032px;top:752px;width:16px;height:16px;background:#0FB3C3;"></div>
<div style="position:absolute;left:1049px;top:752px;width:16px;height:16px;background:#00DDBB;"></div>
<div style="position:absolute;left:1066px;top:752px;width:16px;height:16px;background:#00FF00;"></div>
<div style="position:absolute;left:1083px;top:752px;width:16px;height:16px;background:#66FFCC;"></div>
<div style="position:absolute;left:1100px;top:752px;width:16px;height:16px;background:#33CC66;"></div>
<div style="position:absolute;left:1117px;top:752px;width:16px;height:16px;background:#339966;"></div>
<div style="position:absolute;left:80px;top:769px;width:16px;height:16px;background:#660066;"></div>
<div style="position:absolute;left:97px;top:769px;width:16px;height:16px;background:#CC3300;"></div>
<div style="position:absolute;left:114px;top:769px;width:16px;height:16px;background:#990000;"></div>
<div style="position:absolute;left:131px;top:769px;width:16px;height:16px;background:#4D4D4D;"></div>
<div style="position:absolute;left:148px;top:769px;width:16px;height:16px;background:#993366;"></div>
<div style="position:absolute;left:165px;top:769px;width:16px;height:16px;background:#1A1A1A;"></div>
<div style="position:absolute;left:182px;top:769px;width:16px;height:16px;background:#00A6E6;"></div>
<div style="position:absolute;left:199px;top:769px;width:16px;height:16px;background:#CCFFCC;"></div>
<div style="position:absolute;left:216px;top:769px;width:16px;height:16px;background:#330066;"></div>
<div style="position:absolute;left:233px;top:769px;width:16px;height:16px;background:#9933CC;"></div>
<div style="position:absolute;left:250px;top:769px;width:16px;height:16px;background:#CC66FF;"></div>
<div style="position:absolute;left:267px;top:769px;width:16px;height:16px;background:#CC66CC;"></div>
<div style="position:absolute;left:284px;top:769px;width:16px;height:16px;background:#999999;"></div>
<div style="position:absolute;left:301px;top:769px;width:16px;height:16px;background:#CCCCFF;"></div>
<div style="position:absolute;left:318px;top:769px;width:16px;height:16px;background:#9999FF;"></div>
<div style="position:absolute;left:335px;top:769px;width:16px;height:16px;background:#6633FF;"></div>
<div style="position:absolute;left:352px;top:769px;width:16px;height:16px;background:#669999;"></div>
<div style="position:absolute;left:369px;top:769px;width:16px;height:16px;background:#CC6699;"></div>
<div style="position:absolute;left:386px;top:769px;width:16px;height:16px;background:#99CC33;"></div>
<div style="position:absolute;left:403px;top:769px;width:16px;height:16px;background:#99CCCC;"></div>
<div style="position:absolute;left:420px;top:769px;width:16px;height:16px;background:#99FFFF;"></div>
<div style="position:absolute;left:437px;top:769px;width:16px;height:16px;background:#FF6699;"></div>
<div style="position:absolute;left:454px;top:769px;width:16px;height:16px;background:#FF6666;"></div>
<div style="position:absolute;left:471px;top:769px;width:16px;height:16px;background:#FFFFCC;"></div>
<div style="position:absolute;left:488px;top:769px;width:16px;height:16px;background:#FFFF99;"></div>
<div style="position:absolute;left:505px;top:769px;width:16px;height:16px;background:#CCCCCC;"></div>
<div style="position:absolute;left:522px;top:769px;width:16px;height:16px;background:#CC3399;"></div>
<div style="position:absolute;left:539px;top:769px;width:16px;height:16px;background:#3300CC;"></div>
<div style="position:absolute;left:556px;top:769px;width:16px;height:16px;background:#CC9933;"></div>
<div style="position:absolute;left:573px;top:769px;width:16px;height:16px;background:#E6E6E6;"></div>
<div style="position:absolute;left:590px;top:769px;width:16px;height:16px;background:#CC3366;"></div>
<div style="position:absolute;left:607px;top:769px;width:16px;height:16px;background:#DD1166;"></div>
<div style="position:absolute;left:624px;top:769px;width:16px;height:16px;background:#9966CC;"></div>
<div style="position:absolute;left:641px;top:769px;width:16px;height:16px;background:#5A5048;"></div>
<div style="position:absolute;left:658px;top:769px;width:16px;height:16px;background:#A69A90;"></div>
<div style="position:absolute;left:675px;top:769px;width:16px;height:16px;background:#FFFBF7;"></div>
<div style="position:absolute;left:692px;top:769px;width:16px;height:16px;background:#0FA0CC;"></div>
<div style="position:absolute;left:709px;top:769px;width:16px;height:16px;background:#000066;"></div>
<div style="position:absolute;left:726px;top:769px;width:16px;height:16px;background:#C00A0A;"></div>
<div style="position:absolute;left:743px;top:769px;width:16px;height:16px;background:#223366;"></div>
<div style="position:absolute;left:760px;top:769px;width:16px;height:16px;background:#D3D3D3;"></div>
<div style="position:absolute;left:777px;top:769px;width:16px;height:16px;background:#003333;"></div>
<div style="position:absolute;left:794px;top:769px;width:16px;height:16px;background:#006633;"></div>
<div style="position:absolute;left:811px;top:769px;width:16px;height:16px;background:#EE0A0A;"></div>
<div style="position:absolute;left:828px;top:769px;width:16px;height:16px;background:#6666CC;"></div>
<div style="position:absolute;left:845px;top:769px;width:16px;height:16px;background:#DD1F1F;"></div>
<div style="position:absolute;left:862px;top:769px;width:16px;height:16px;background:#EE1111;"></div>
<div style="position:absolute;left:879px;top:769px;width:16px;height:16px;background:#00FFFF;"></div>
<div style="position:absolute;left:896px;top:769px;width:16px;height:16px;background:#330099;"></div>
<div style="position:absolute;left:913px;top:769px;width:16px;height:16px;background:#333300;"></div>
<div style="position:absolute;left:930px;top:769px;width:16px;height:16px;background:#E6EDED;"></div>
<div style="position:absolute;left:947px;top:769px;width:16px;height:16px;background:#A10A0A;"></div>
<div style="position:absolute;left:964px;top:769px;width:16px;height:16px;background:#BF3333;"></div>
<div style="position:absolute;left:981px;top:769px;width:16px;height:16px;background:#996699;"></div>
<div style="position:absolute;left:998px;top:769px;width:16px;height:16px;background:#E61A1A;"></div>
<div style="position:absolute;left:317px;top:768px;width:18px;height:18px;background:none;border:1px solid #fff;outline:1px solid #333;"></div>
<div style="position:absolute;left:7.50px;top:799.05px;font-size:12px;line-height:1;white-space:pre;color:#1c1020;letter-spacing:-0.602px;">( 15.504; 16.592 )</div>
<svg style="position:absolute;left:115px;top:801px;" width="5" height="9" viewBox="0 0 5 9"><path d="M0.5,0 L4.5,4.5 L0.5,9 Z" fill="#000"/></svg>
<svg style="position:absolute;left:694px;top:796px;" width="18" height="17" viewBox="0 0 18 17"><rect x="0.6" y="0.6" width="16.8" height="12" fill="#fff" stroke="#333" stroke-width="1.1"/><rect x="2" y="2" width="14" height="4.6" fill="#E8141E"/><rect x="2" y="6.6" width="14" height="4.6" fill="#1AA0E0"/>
<ellipse cx="9" cy="6.6" rx="3" ry="1.8" fill="#fff" stroke="#333" stroke-width="0.6"/><path d="M6,15.6 H12" stroke="#333" stroke-width="1.4"/><path d="M9,12.6 V15" stroke="#333" stroke-width="1.2"/></svg>
<svg style="position:absolute;left:728px;top:796px;" width="18" height="18" viewBox="0 0 18 18"><path d="M1.5,8 L8,1.5 L14.5,8 L8,14.5 Z" fill="#fff" stroke="#222" stroke-width="1.7"/><path d="M4.2,8 H11.8 L8,11.6 Z" fill="#E8141E"/><path d="M12,16.6 L17,11.6 V16.6 Z" fill="#E8141E"/></svg>
<div style="position:absolute;left:747px;top:794px;width:22px;height:22px;background:#fff;border:1px solid #777;"></div>
<svg style="position:absolute;left:748px;top:795px;" width="20" height="20" viewBox="0 0 20 20"><path d="M0.5,0.5 L19.5,19.5 M19.5,0.5 L0.5,19.5" stroke="#333" stroke-width="1"/></svg>
<div style="position:absolute;left:773.40px;top:799.45px;font-size:12px;line-height:1;white-space:pre;color:#1c1020;letter-spacing:-0.029px;">None</div>
<div style="position:absolute;left:926px;top:795px;width:1px;height:20px;background:#C8C8C8;"></div>
<svg style="position:absolute;left:942px;top:797px;" width="10" height="17" viewBox="0 0 10 17"><path d="M5,0.6 L8.6,8 L7,12 H3 L1.4,8 Z" fill="#fff" stroke="#222" stroke-width="1.1"/><path d="M5,4.6 V9" stroke="#222" stroke-width="1"/><rect x="2.6" y="12.6" width="4.8" height="3.4" fill="#fff" stroke="#222" stroke-width="1"/></svg>
<div style="position:absolute;left:954px;top:794px;width:22px;height:22px;background:#000;border:1px solid #444;"></div>
<div style="position:absolute;left:980.40px;top:799.45px;font-size:12px;line-height:1;white-space:pre;color:#1c1020;letter-spacing:-0.538px;">R:0 G:0 B:0 (#000000)  2 px</div>
<div style="position:absolute;left:0;top:0;width:1152px;height:825px;will-change:transform;"><svg style="position:absolute;left:109.20px;top:203.80px;" width="42.50" height="46.90" viewBox="0 0 100 100" preserveAspectRatio="none"><rect width="100" height="100" fill="#E6E6E6"/><path d="M0,0 C25,0 48,18 50,50 L50,100 L0,100 Z" fill="#99CCCC"/><path d="M50,100 L50,50 C50,30 58,10 67,0 L67,100 Z" fill="#336666"/><path d="M67,25 C72,18 78,13 83,11 L83,100 L67,100 Z" fill="#669999"/><path d="M83,35 C88,31 94,29 100,29 L100,100 L83,100 Z" fill="#99CCCC"/></svg>
<div style="position:absolute;left:102.50px;top:256.29px;font-size:14.2px;line-height:1;white-space:pre;color:#66A3A3;transform:scaleX(1.0172);transform-origin:0 0;">M<span style="font-size:87%">y</span>R<span style="font-size:87%">eads</span></div>
<svg style="position:absolute;left:178.90px;top:203.00px;" width="27.10" height="31.30" viewBox="0 0 100 100" preserveAspectRatio="none"><rect width="100" height="100" fill="#E6E6E6"/><path d="M0,0 C25,0 48,18 50,50 L50,100 L0,100 Z" fill="#99CCCC"/><path d="M50,100 L50,50 C50,30 58,10 67,0 L67,100 Z" fill="#336666"/><path d="M67,25 C72,18 78,13 83,11 L83,100 L67,100 Z" fill="#669999"/><path d="M83,35 C88,31 94,29 100,29 L100,100 L83,100 Z" fill="#99CCCC"/></svg>
<div style="position:absolute;left:213.80px;top:214.69px;font-size:14.2px;line-height:1;white-space:pre;color:#66A3A3;transform:scaleX(1.0536);transform-origin:0 0;">M<span style="font-size:87%">y</span>R<span style="font-size:87%">eads</span></div>
<svg style="position:absolute;left:244.20px;top:239.10px;" width="27.70" height="30.50" viewBox="0 0 100 100" preserveAspectRatio="none"><rect width="100" height="100" fill="#E6E6E6"/><path d="M0,0 C25,0 48,18 50,50 L50,100 L0,100 Z" fill="#99CCCC"/><path d="M50,100 L50,50 C50,30 58,10 67,0 L67,100 Z" fill="#336666"/><path d="M67,25 C72,18 78,13 83,11 L83,100 L67,100 Z" fill="#669999"/><path d="M83,35 C88,31 94,29 100,29 L100,100 L83,100 Z" fill="#99CCCC"/></svg>
<svg style="position:absolute;left:80.25px;top:280.25px;" width="208" height="2" viewBox="0 0 208 2"><g fill="#2a2a2a"><rect x="0.00" y="0" width="1.5" height="1.5"/><rect x="5.68" y="0" width="1.5" height="1.5"/><rect x="11.36" y="0" width="1.5" height="1.5"/><rect x="17.04" y="0" width="1.5" height="1.5"/><rect x="22.72" y="0" width="1.5" height="1.5"/><rect x="28.40" y="0" width="1.5" height="1.5"/><rect x="34.08" y="0" width="1.5" height="1.5"/><rect x="39.76" y="0" width="1.5" height="1.5"/><rect x="45.44" y="0" width="1.5" height="1.5"/><rect x="51.12" y="0" width="1.5" height="1.5"/><rect x="56.80" y="0" width="1.5" height="1.5"/><rect x="62.48" y="0" width="1.5" height="1.5"/><rect x="68.16" y="0" width="1.5" height="1.5"/><rect x="73.84" y="0" width="1.5" height="1.5"/><rect x="79.52" y="0" width="1.5" height="1.5"/><rect x="85.20" y="0" width="1.5" height="1.5"/><rect x="90.88" y="0" width="1.5" height="1.5"/><rect x="96.56" y="0" width="1.5" height="1.5"/><rect x="102.24" y="0" width="1.5" height="1.5"/><rect x="107.92" y="0" width="1.5" height="1.5"/><rect x="113.60" y="0" width="1.5" height="1.5"/><rect x="119.28" y="0" width="1.5" height="1.5"/><rect x="124.96" y="0" width="1.5" height="1.5"/><rect x="130.64" y="0" width="1.5" height="1.5"/><rect x="136.32" y="0" width="1.5" height="1.5"/><rect x="142.00" y="0" width="1.5" height="1.5"/><rect x="147.68" y="0" width="1.5" height="1.5"/><rect x="153.36" y="0" width="1.5" height="1.5"/><rect x="159.04" y="0" width="1.5" height="1.5"/><rect x="164.72" y="0" width="1.5" height="1.5"/><rect x="170.40" y="0" width="1.5" height="1.5"/><rect x="176.08" y="0" width="1.5" height="1.5"/><rect x="181.76" y="0" width="1.5" height="1.5"/><rect x="187.44" y="0" width="1.5" height="1.5"/><rect x="193.12" y="0" width="1.5" height="1.5"/><rect x="198.80" y="0" width="1.5" height="1.5"/><rect x="204.48" y="0" width="1.5" height="1.5"/></g></svg>
<div style="position:absolute;left:87.20px;top:288.26px;font-size:8.2px;line-height:1;white-space:pre;color:#161616;transform:scaleX(0.9241);transform-origin:0 0;letter-spacing:-0.316px;">D<span style="font-size:87%">e</span>t<span style="font-size:87%">ai</span>l<span style="font-size:87%">s</span></div>
<div style="position:absolute;left:87.20px;top:304.66px;font-size:5.6px;line-height:1;white-space:pre;color:#161616;transform:scaleX(1.0344);transform-origin:0 0;letter-spacing:0.088px;-webkit-text-stroke:0.12px currentColor;">MyReads: A Book Tracking App is a React.js app which allows to add</div>
<div style="position:absolute;left:87.20px;top:311.96px;font-size:5.6px;line-height:1;white-space:pre;color:#161616;transform:scaleX(1.0469);transform-origin:0 0;letter-spacing:0.117px;-webkit-text-stroke:0.12px currentColor;">books and move them into different shelves, depending on the user</div>
<svg style="position:absolute;left:78.75px;top:369.85px;" width="209.0" height="2" viewBox="0 0 209.0 2"><g fill="#2a2a2a"><rect x="0.00" y="0" width="1.5" height="1.5"/><rect x="5.68" y="0" width="1.5" height="1.5"/><rect x="11.36" y="0" width="1.5" height="1.5"/><rect x="17.04" y="0" width="1.5" height="1.5"/><rect x="22.72" y="0" width="1.5" height="1.5"/><rect x="28.40" y="0" width="1.5" height="1.5"/><rect x="34.08" y="0" width="1.5" height="1.5"/><rect x="39.76" y="0" width="1.5" height="1.5"/><rect x="45.44" y="0" width="1.5" height="1.5"/><rect x="51.12" y="0" width="1.5" height="1.5"/><rect x="56.80" y="0" width="1.5" height="1.5"/><rect x="62.48" y="0" width="1.5" height="1.5"/><rect x="68.16" y="0" width="1.5" height="1.5"/><rect x="73.84" y="0" width="1.5" height="1.5"/><rect x="79.52" y="0" width="1.5" height="1.5"/><rect x="85.20" y="0" width="1.5" height="1.5"/><rect x="90.88" y="0" width="1.5" height="1.5"/><rect x="96.56" y="0" width="1.5" height="1.5"/><rect x="102.24" y="0" width="1.5" height="1.5"/><rect x="107.92" y="0" width="1.5" height="1.5"/><rect x="113.60" y="0" width="1.5" height="1.5"/><rect x="119.28" y="0" width="1.5" height="1.5"/><rect x="124.96" y="0" width="1.5" height="1.5"/><rect x="130.64" y="0" width="1.5" height="1.5"/><rect x="136.32" y="0" width="1.5" height="1.5"/><rect x="142.00" y="0" width="1.5" height="1.5"/><rect x="147.68" y="0" width="1.5" height="1.5"/><rect x="153.36" y="0" width="1.5" height="1.5"/><rect x="159.04" y="0" width="1.5" height="1.5"/><rect x="164.72" y="0" width="1.5" height="1.5"/><rect x="170.40" y="0" width="1.5" height="1.5"/><rect x="176.08" y="0" width="1.5" height="1.5"/><rect x="181.76" y="0" width="1.5" height="1.5"/><rect x="187.44" y="0" width="1.5" height="1.5"/><rect x="193.12" y="0" width="1.5" height="1.5"/><rect x="198.80" y="0" width="1.5" height="1.5"/><rect x="204.48" y="0" width="1.5" height="1.5"/></g></svg>
<div style="position:absolute;left:138.80px;top:398.22px;font-size:14.4px;line-height:1;white-space:pre;color:#1a1a1a;transform:scaleX(0.9477);transform-origin:0 0;letter-spacing:-0.540px;">THE DESIGN</div>
<svg style="position:absolute;left:78.75px;top:436.05px;" width="209.0" height="2" viewBox="0 0 209.0 2"><g fill="#2a2a2a"><rect x="0.00" y="0" width="1.5" height="1.5"/><rect x="5.68" y="0" width="1.5" height="1.5"/><rect x="11.36" y="0" width="1.5" height="1.5"/><rect x="17.04" y="0" width="1.5" height="1.5"/><rect x="22.72" y="0" width="1.5" height="1.5"/><rect x="28.40" y="0" width="1.5" height="1.5"/><rect x="34.08" y="0" width="1.5" height="1.5"/><rect x="39.76" y="0" width="1.5" height="1.5"/><rect x="45.44" y="0" width="1.5" height="1.5"/><rect x="51.12" y="0" width="1.5" height="1.5"/><rect x="56.80" y="0" width="1.5" height="1.5"/><rect x="62.48" y="0" width="1.5" height="1.5"/><rect x="68.16" y="0" width="1.5" height="1.5"/><rect x="73.84" y="0" width="1.5" height="1.5"/><rect x="79.52" y="0" width="1.5" height="1.5"/><rect x="85.20" y="0" width="1.5" height="1.5"/><rect x="90.88" y="0" width="1.5" height="1.5"/><rect x="96.56" y="0" width="1.5" height="1.5"/><rect x="102.24" y="0" width="1.5" height="1.5"/><rect x="107.92" y="0" width="1.5" height="1.5"/><rect x="113.60" y="0" width="1.5" height="1.5"/><rect x="119.28" y="0" width="1.5" height="1.5"/><rect x="124.96" y="0" width="1.5" height="1.5"/><rect x="130.64" y="0" width="1.5" height="1.5"/><rect x="136.32" y="0" width="1.5" height="1.5"/><rect x="142.00" y="0" width="1.5" height="1.5"/><rect x="147.68" y="0" width="1.5" height="1.5"/><rect x="153.36" y="0" width="1.5" height="1.5"/><rect x="159.04" y="0" width="1.5" height="1.5"/><rect x="164.72" y="0" width="1.5" height="1.5"/><rect x="170.40" y="0" width="1.5" height="1.5"/><rect x="176.08" y="0" width="1.5" height="1.5"/><rect x="181.76" y="0" width="1.5" height="1.5"/><rect x="187.44" y="0" width="1.5" height="1.5"/><rect x="193.12" y="0" width="1.5" height="1.5"/><rect x="198.80" y="0" width="1.5" height="1.5"/><rect x="204.48" y="0" width="1.5" height="1.5"/></g></svg>
<div style="position:absolute;left:79.00px;top:444.71px;font-size:7.2px;line-height:1;white-space:pre;color:#161616;transform:scaleX(1.0189);transform-origin:0 0;letter-spacing:0.060px;">L<span style="font-size:87%">ogo</span> C<span style="font-size:87%">oncep</span>t / Id<span style="font-size:87%">ea</span> / Sk<span style="font-size:87%">e</span>t<span style="font-size:87%">c</span>h</div>
<svg style="position:absolute;left:145px;top:465px;" width="70" height="60" viewBox="0 0 962 825"><path d="M70,760 L70,330 C70,250 150,150 280,145 C370,145 430,185 470,225 L485,175 L590,68 L692,68 L692,150 C780,170 850,240 858,330 L905,330 L905,762 Z" fill="#000"/>
<path d="M130,660 L130,285 C160,220 220,195 285,195 C350,195 410,230 440,280 L440,660 C400,620 350,600 285,600 C220,600 160,625 130,660 Z" fill="#fff"/>
<path d="M205,655 H370 V672 H205 Z M578,655 H740 V672 H578 Z" fill="#fff"/>
<path d="M495,600 L495,245 C515,190 560,140 600,105 L650,105 L650,540 C590,545 530,560 495,600 Z" fill="#fff"/>
<path d="M695,210 C750,220 800,260 810,300 L810,660 C770,620 720,605 660,605 L580,605 C540,615 515,640 500,655 L510,625 C540,598 600,590 695,585 Z" fill="#fff"/></svg>
<svg style="position:absolute;left:78.75px;top:537.85px;" width="209.0" height="2" viewBox="0 0 209.0 2"><g fill="#2a2a2a"><rect x="0.00" y="0" width="1.5" height="1.5"/><rect x="5.68" y="0" width="1.5" height="1.5"/><rect x="11.36" y="0" width="1.5" height="1.5"/><rect x="17.04" y="0" width="1.5" height="1.5"/><rect x="22.72" y="0" width="1.5" height="1.5"/><rect x="28.40" y="0" width="1.5" height="1.5"/><rect x="34.08" y="0" width="1.5" height="1.5"/><rect x="39.76" y="0" width="1.5" height="1.5"/><rect x="45.44" y="0" width="1.5" height="1.5"/><rect x="51.12" y="0" width="1.5" height="1.5"/><rect x="56.80" y="0" width="1.5" height="1.5"/><rect x="62.48" y="0" width="1.5" height="1.5"/><rect x="68.16" y="0" width="1.5" height="1.5"/><rect x="73.84" y="0" width="1.5" height="1.5"/><rect x="79.52" y="0" width="1.5" height="1.5"/><rect x="85.20" y="0" width="1.5" height="1.5"/><rect x="90.88" y="0" width="1.5" height="1.5"/><rect x="96.56" y="0" width="1.5" height="1.5"/><rect x="102.24" y="0" width="1.5" height="1.5"/><rect x="107.92" y="0" width="1.5" height="1.5"/><rect x="113.60" y="0" width="1.5" height="1.5"/><rect x="119.28" y="0" width="1.5" height="1.5"/><rect x="124.96" y="0" width="1.5" height="1.5"/><rect x="130.64" y="0" width="1.5" height="1.5"/><rect x="136.32" y="0" width="1.5" height="1.5"/><rect x="142.00" y="0" width="1.5" height="1.5"/><rect x="147.68" y="0" width="1.5" height="1.5"/><rect x="153.36" y="0" width="1.5" height="1.5"/><rect x="159.04" y="0" width="1.5" height="1.5"/><rect x="164.72" y="0" width="1.5" height="1.5"/><rect x="170.40" y="0" width="1.5" height="1.5"/><rect x="176.08" y="0" width="1.5" height="1.5"/><rect x="181.76" y="0" width="1.5" height="1.5"/><rect x="187.44" y="0" width="1.5" height="1.5"/><rect x="193.12" y="0" width="1.5" height="1.5"/><rect x="198.80" y="0" width="1.5" height="1.5"/><rect x="204.48" y="0" width="1.5" height="1.5"/></g></svg>
<svg style="position:absolute;left:75px;top:568px;" width="217" height="122" viewBox="0 0 217 122"><defs><radialGradient id="mbg" cx="0.5" cy="0.3" r="0.8"><stop offset="0" stop-color="#EBEDF0"/><stop offset="1" stop-color="#DDE0E5"/></radialGradient>
<linearGradient id="mstand" x1="0" y1="0" x2="0" y2="1"><stop offset="0" stop-color="#D6D9DD"/><stop offset="1" stop-color="#BEC1C6"/></linearGradient>
<linearGradient id="mchin" x1="0" y1="0" x2="0" y2="1"><stop offset="0" stop-color="#F3F4F6"/><stop offset="1" stop-color="#E6E8EB"/></linearGradient>
<filter id="mblur" x="-0.5" y="-2" width="2" height="5"><feGaussianBlur stdDeviation="2.2"/></filter></defs>
<rect width="217" height="122" fill="url(#mbg)"/>
<ellipse cx="108" cy="98" rx="54" ry="3.5" fill="#BCC0C6" opacity="0.55" filter="url(#mblur)"/>
<rect x="47.2" y="8" width="120.6" height="82" rx="3.5" fill="url(#mchin)"/>
<path d="M94,90 H121.7 L123,98.7 H92.6 Z" fill="url(#mstand)"/>
<rect x="91" y="98.7" width="36" height="3.5" fill="#E4E6E9"/>
<rect x="51" y="11.4" width="113.3" height="64.4" fill="#6B6969"/>
<path d="M107.7,81.6 C106.8,80.6 104.9,81 104.9,83.3 C104.9,85.4 106.6,87.2 107.7,86.8 C108.8,87.2 110.5,85.4 110.5,83.3 C110.5,81 108.6,80.6 107.7,81.6 Z M107.8,80.9 C107.9,80 108.5,79.5 109.1,79.4" fill="#A3A6AB" stroke="#A3A6AB" stroke-width="0.3"/>
<path d="M48.3,103.4 H110 Q114,104 114,107 Q113,111.5 109,112.8 H49.5 Z" fill="#F2F3F5" stroke="#D5D8DD" stroke-width="0.6"/><path d="M52,106 H108 M52,108.5 H109 M53,111 H107" stroke="#DADDE2" stroke-width="0.6" stroke-dasharray="1.5,1.2"/>
<path d="M129,105 H168 L168.6,112.8 H128.7 Z" fill="#EDEFF2" stroke="#C8CBD1" stroke-width="0.6"/>
<ellipse cx="185.7" cy="109.2" rx="11.6" ry="3.8" fill="#EDEFF2" stroke="#C4C7CD" stroke-width="0.7"/></svg>
<svg style="position:absolute;left:169.80px;top:591.50px;" width="27.40" height="29.50" viewBox="0 0 100 100" preserveAspectRatio="none"><rect width="100" height="100" fill="#E6E6E6"/><path d="M0,0 C25,0 48,18 50,50 L50,100 L0,100 Z" fill="#99CCCC"/><path d="M50,100 L50,50 C50,30 58,10 67,0 L67,100 Z" fill="#336666"/><path d="M67,25 C72,18 78,13 83,11 L83,100 L67,100 Z" fill="#669999"/><path d="M83,35 C88,31 94,29 100,29 L100,100 L83,100 Z" fill="#99CCCC"/></svg>
<div style="position:absolute;left:167.50px;top:625.39px;font-size:9px;line-height:1;white-space:pre;color:#5FA0A0;transform:scaleX(0.9601);transform-origin:0 0;">M<span style="font-size:87%">y</span>R<span style="font-size:87%">eads</span></div>
<div style="position:absolute;left:310.40px;top:224.55px;font-size:8.1px;line-height:1;white-space:pre;color:#161616;transform:scaleX(0.9699);transform-origin:0 0;letter-spacing:-0.111px;">B<span style="font-size:87%">ene</span>f<span style="font-size:87%">i</span>t<span style="font-size:87%">s</span> / I<span style="font-size:87%">mprovemen</span>t<span style="font-size:87%">s</span></div>
<div style="position:absolute;left:310.40px;top:268.06px;font-size:5.6px;line-height:1;white-space:pre;color:#161616;transform:scaleX(1.0344);transform-origin:0 0;letter-spacing:0.077px;-webkit-text-stroke:0.12px currentColor;">I create 3 different designs for this project, so for the 1st design, I create 3</div>
<div style="position:absolute;left:310.40px;top:275.41px;font-size:5.6px;line-height:1;white-space:pre;color:#161616;transform:scaleX(1.0422);transform-origin:0 0;letter-spacing:0.100px;-webkit-text-stroke:0.12px currentColor;">blocks that represent 3 books (currently reading, want to read and read), for</div>
<div style="position:absolute;left:310.40px;top:282.76px;font-size:5.6px;line-height:1;white-space:pre;color:#161616;transform:scaleX(1.0424);transform-origin:0 0;letter-spacing:0.099px;-webkit-text-stroke:0.12px currentColor;">the 2nd logo, I create a open book that is a reference to currently reading</div>
<div style="position:absolute;left:310.40px;top:290.11px;font-size:5.6px;line-height:1;white-space:pre;color:#161616;transform:scaleX(1.0378);transform-origin:0 0;letter-spacing:0.092px;-webkit-text-stroke:0.12px currentColor;">and the other 2 pages are a reference to want to read and read, the 3rd</div>
<div style="position:absolute;left:310.40px;top:297.46px;font-size:5.6px;line-height:1;white-space:pre;color:#161616;transform:scaleX(1.0407);transform-origin:0 0;letter-spacing:0.098px;-webkit-text-stroke:0.12px currentColor;">design I create a eyes with glasses that represent reading, the two semi</div>
<div style="position:absolute;left:310.40px;top:304.81px;font-size:5.6px;line-height:1;white-space:pre;color:#161616;transform:scaleX(1.0341);transform-origin:0 0;letter-spacing:0.084px;-webkit-text-stroke:0.12px currentColor;">circles of the eyes represent an open book.</div>
<div style="position:absolute;left:310.40px;top:319.06px;font-size:5.6px;line-height:1;white-space:pre;color:#161616;transform:scaleX(1.0425);transform-origin:0 0;letter-spacing:0.102px;-webkit-text-stroke:0.12px currentColor;">The owner like all the design and choose the 2nd design for the project.</div>
<div style="position:absolute;left:310.40px;top:341.06px;font-size:5.6px;line-height:1;white-space:pre;color:#161616;transform:scaleX(1.0555);transform-origin:0 0;letter-spacing:0.131px;-webkit-text-stroke:0.12px currentColor;">What benefits does this bring to the project?</div>
<div style="position:absolute;left:310.40px;top:355.66px;font-size:5.6px;line-height:1;white-space:pre;color:#161616;transform:scaleX(1.0360);transform-origin:0 0;letter-spacing:0.089px;-webkit-text-stroke:0.12px currentColor;">- MyReads did not have a logo, so my proposal gives to the project a new</div>
<div style="position:absolute;left:310.40px;top:363.06px;font-size:5.6px;line-height:1;white-space:pre;color:#161616;transform:scaleX(1.0719);transform-origin:0 0;letter-spacing:0.158px;-webkit-text-stroke:0.12px currentColor;">identity.</div>
<div style="position:absolute;left:310.40px;top:377.66px;font-size:5.6px;line-height:1;white-space:pre;color:#161616;transform:scaleX(1.0393);transform-origin:0 0;letter-spacing:0.096px;-webkit-text-stroke:0.12px currentColor;">- The project owner was very pleased with this proposal.</div>
<div style="position:absolute;left:310.40px;top:392.26px;font-size:5.6px;line-height:1;white-space:pre;color:#161616;transform:scaleX(1.0439);transform-origin:0 0;letter-spacing:0.109px;-webkit-text-stroke:0.12px currentColor;">- The logo it´s modern and easy to remeber.</div>
<div style="position:absolute;left:310.40px;top:407.06px;font-size:5.6px;line-height:1;white-space:pre;color:#161616;transform:scaleX(1.0478);transform-origin:0 0;letter-spacing:0.115px;-webkit-text-stroke:0.12px currentColor;">- The owner like the logo  and merged to the main repository and in the</div>
<div style="position:absolute;left:310.40px;top:414.46px;font-size:5.6px;line-height:1;white-space:pre;color:#161616;transform:scaleX(1.0336);transform-origin:0 0;letter-spacing:0.092px;-webkit-text-stroke:0.12px currentColor;">README page of the project.</div>
<svg style="position:absolute;left:309.75px;top:439.05px;" width="207.5" height="2" viewBox="0 0 207.5 2"><g fill="#2a2a2a"><rect x="0.00" y="0" width="1.5" height="1.5"/><rect x="5.68" y="0" width="1.5" height="1.5"/><rect x="11.36" y="0" width="1.5" height="1.5"/><rect x="17.04" y="0" width="1.5" height="1.5"/><rect x="22.72" y="0" width="1.5" height="1.5"/><rect x="28.40" y="0" width="1.5" height="1.5"/><rect x="34.08" y="0" width="1.5" height="1.5"/><rect x="39.76" y="0" width="1.5" height="1.5"/><rect x="45.44" y="0" width="1.5" height="1.5"/><rect x="51.12" y="0" width="1.5" height="1.5"/><rect x="56.80" y="0" width="1.5" height="1.5"/><rect x="62.48" y="0" width="1.5" height="1.5"/><rect x="68.16" y="0" width="1.5" height="1.5"/><rect x="73.84" y="0" width="1.5" height="1.5"/><rect x="79.52" y="0" width="1.5" height="1.5"/><rect x="85.20" y="0" width="1.5" height="1.5"/><rect x="90.88" y="0" width="1.5" height="1.5"/><rect x="96.56" y="0" width="1.5" height="1.5"/><rect x="102.24" y="0" width="1.5" height="1.5"/><rect x="107.92" y="0" width="1.5" height="1.5"/><rect x="113.60" y="0" width="1.5" height="1.5"/><rect x="119.28" y="0" width="1.5" height="1.5"/><rect x="124.96" y="0" width="1.5" height="1.5"/><rect x="130.64" y="0" width="1.5" height="1.5"/><rect x="136.32" y="0" width="1.5" height="1.5"/><rect x="142.00" y="0" width="1.5" height="1.5"/><rect x="147.68" y="0" width="1.5" height="1.5"/><rect x="153.36" y="0" width="1.5" height="1.5"/><rect x="159.04" y="0" width="1.5" height="1.5"/><rect x="164.72" y="0" width="1.5" height="1.5"/><rect x="170.40" y="0" width="1.5" height="1.5"/><rect x="176.08" y="0" width="1.5" height="1.5"/><rect x="181.76" y="0" width="1.5" height="1.5"/><rect x="187.44" y="0" width="1.5" height="1.5"/><rect x="193.12" y="0" width="1.5" height="1.5"/><rect x="198.80" y="0" width="1.5" height="1.5"/><rect x="204.48" y="0" width="1.5" height="1.5"/></g></svg>
<div style="position:absolute;left:310.40px;top:449.15px;font-size:8.1px;line-height:1;white-space:pre;color:#161616;transform:scaleX(0.9794);transform-origin:0 0;letter-spacing:-0.094px;">C<span style="font-size:87%">o</span>l<span style="font-size:87%">or</span></div>
<svg style="position:absolute;left:393.90px;top:474.30px;" width="42.20" height="46.60" viewBox="0 0 100 100" preserveAspectRatio="none"><rect width="100" height="100" fill="#E6E6E6"/><path d="M0,0 C25,0 48,18 50,50 L50,100 L0,100 Z" fill="#99CCCC"/><path d="M50,100 L50,50 C50,30 58,10 67,0 L67,100 Z" fill="#336666"/><path d="M67,25 C72,18 78,13 83,11 L83,100 L67,100 Z" fill="#669999"/><path d="M83,35 C88,31 94,29 100,29 L100,100 L83,100 Z" fill="#99CCCC"/></svg>
<div style="position:absolute;left:387.20px;top:527.36px;font-size:14px;line-height:1;white-space:pre;color:#66A3A3;transform:scaleX(1.0097);transform-origin:0 0;">M<span style="font-size:87%">y</span>R<span style="font-size:87%">eads</span></div>
<div style="position:absolute;left:310px;top:551px;width:104.5px;height:42.5px;background:#000;"></div>
<div style="position:absolute;left:414.5px;top:551px;width:104.5px;height:42.5px;background:#E6E6E6;"></div>
<div style="position:absolute;left:351.2px;top:554.8px;width:22.3px;height:25.3px;background:#E8E8E8;"></div>
<svg style="position:absolute;left:351.70px;top:555.30px;" width="21.30" height="24.30" viewBox="0 0 100 100" preserveAspectRatio="none"><rect width="100" height="100" fill="#E6E6E6"/><path d="M0,0 C25,0 48,18 50,50 L50,100 L0,100 Z" fill="#99CCCC"/><path d="M50,100 L50,50 C50,30 58,10 67,0 L67,100 Z" fill="#336666"/><path d="M67,25 C72,18 78,13 83,11 L83,100 L67,100 Z" fill="#669999"/><path d="M83,35 C88,31 94,29 100,29 L100,100 L83,100 Z" fill="#99CCCC"/></svg>
<div style="position:absolute;left:347.20px;top:582.88px;font-size:7px;line-height:1;white-space:pre;color:#66A3A3;transform:scaleX(1.0981);transform-origin:0 0;">M<span style="font-size:87%">y</span>R<span style="font-size:87%">eads</span></div>
<svg style="position:absolute;left:455.60px;top:554.00px;" width="21.60" height="24.00" viewBox="0 0 100 100" preserveAspectRatio="none"><path d="M0,0 C25,0 48,18 50,50 L50,100 L0,100 Z" fill="#99CCCC"/><path d="M50,100 L50,50 C50,30 58,10 67,0 L67,100 Z" fill="#336666"/><path d="M67,25 C72,18 78,13 83,11 L83,100 L67,100 Z" fill="#669999"/><path d="M83,35 C88,31 94,29 100,29 L100,100 L83,100 Z" fill="#99CCCC"/></svg>
<div style="position:absolute;left:452.20px;top:580.88px;font-size:7px;line-height:1;white-space:pre;color:#66A3A3;transform:scaleX(1.0612);transform-origin:0 0;">M<span style="font-size:87%">y</span>R<span style="font-size:87%">eads</span></div>
<div style="position:absolute;left:337px;top:601px;width:28px;height:18px;background:#000;border:1.3px solid #000;"></div>
<div style="position:absolute;left:364px;top:601px;width:25px;height:18px;background:#336666;border:1.3px solid #000;"></div>
<div style="position:absolute;left:388px;top:601px;width:27px;height:18px;background:#669999;border:1.3px solid #000;"></div>
<div style="position:absolute;left:414px;top:601px;width:27px;height:18px;background:#99CCCC;border:1.3px solid #000;"></div>
<div style="position:absolute;left:440px;top:601px;width:26px;height:18px;background:#E6E6E6;border:1.3px solid #000;"></div>
<div style="position:absolute;left:465px;top:601px;width:28px;height:18px;background:#FFFFFF;border:1.3px solid #000;"></div>
<div style="position:absolute;left:337px;top:622px;width:161px;height:1.2px;background:#555;"></div>
<svg style="position:absolute;left:336px;top:622px;" width="157" height="8" viewBox="0 0 157 8"><path d="M1,1 V7 H155 V1" fill="none" stroke="#222" stroke-width="1" stroke-dasharray="2.4,1.8"/></svg>
<div style="position:absolute;left:571.5px;top:239.2px;width:104.59999999999995px;height:42.20000000000003px;background:#E6E6E6;"></div>
<div style="position:absolute;left:675.8px;top:239.2px;width:104.40000000000002px;height:42.20000000000003px;background:#000;"></div>
<div style="position:absolute;left:571.5px;top:281.1px;width:104.59999999999995px;height:42.89999999999996px;background:#000;"></div>
<div style="position:absolute;left:675.8px;top:281.1px;width:104.40000000000002px;height:42.89999999999996px;background:#E6E6E6;"></div>
<div style="position:absolute;left:571.5px;top:323.7px;width:104.59999999999995px;height:42.499999999999986px;background:#E6E6E6;"></div>
<div style="position:absolute;left:675.8px;top:323.7px;width:104.40000000000002px;height:42.499999999999986px;background:#000;"></div>
<div style="position:absolute;left:571.5px;top:365.9px;width:104.59999999999995px;height:43.10000000000001px;background:#000;"></div>
<div style="position:absolute;left:675.8px;top:365.9px;width:104.40000000000002px;height:43.10000000000001px;background:#E6E6E6;"></div>
<svg style="position:absolute;left:612.90px;top:243.80px;" width="21.50" height="24.10" viewBox="0 0 100 100" preserveAspectRatio="none"><path d="M0,0 C25,0 48,18 50,50 L50,100 L0,100 Z" fill="#FF6699"/><path d="M50,100 L50,50 C50,30 58,10 67,0 L67,100 Z" fill="#FF0066"/><path d="M67,25 C72,18 78,13 83,11 L83,100 L67,100 Z" fill="#FF3399"/><path d="M83,35 C88,31 94,29 100,29 L100,100 L83,100 Z" fill="#FF6699"/></svg>
<div style="position:absolute;left:608.80px;top:270.77px;font-size:7.6px;line-height:1;white-space:pre;color:#FF3399;transform:scaleX(1.0012);transform-origin:0 0;">M<span style="font-size:87%">y</span>R<span style="font-size:87%">eads</span></div>
<svg style="position:absolute;left:717.10px;top:242.90px;" width="21.50" height="23.60" viewBox="0 0 100 100" preserveAspectRatio="none"><rect width="100" height="100" fill="#E6E6E6"/><path d="M0,0 C25,0 48,18 50,50 L50,100 L0,100 Z" fill="#CC66FF"/><path d="M50,100 L50,50 C50,30 58,10 67,0 L67,100 Z" fill="#990099"/><path d="M67,25 C72,18 78,13 83,11 L83,100 L67,100 Z" fill="#9933CC"/><path d="M83,35 C88,31 94,29 100,29 L100,100 L83,100 Z" fill="#CC66FF"/></svg>
<div style="position:absolute;left:713.00px;top:269.57px;font-size:7.6px;line-height:1;white-space:pre;color:#9933CC;transform:scaleX(0.9978);transform-origin:0 0;">M<span style="font-size:87%">y</span>R<span style="font-size:87%">eads</span></div>
<svg style="position:absolute;left:585.70px;top:288.90px;" width="24.20" height="26.80" viewBox="0 0 100 100" preserveAspectRatio="none"><path d="M0,0 C25,0 48,18 48,50 L49,52 C51,30 58,10 65.6,0 L67.7,22 L82.8,10.7 L85,32 L92,29 L100,27 L100,100 L0,100 Z" fill="#CCFF66"/></svg>
<div style="position:absolute;left:615.70px;top:298.94px;font-size:12.6px;line-height:1;white-space:pre;color:#CCFF66;transform:scaleX(1.0133);transform-origin:0 0;">M<span style="font-size:87%">y</span>R<span style="font-size:87%">eads</span></div>
<svg style="position:absolute;left:689.00px;top:289.40px;" width="24.10" height="26.50" viewBox="0 0 100 100" preserveAspectRatio="none"><path d="M0,0 C25,0 48,18 48,50 L49,52 C51,30 58,10 65.6,0 L67.7,22 L82.8,10.7 L85,32 L92,29 L100,27 L100,100 L0,100 Z" fill="#CC9933"/></svg>
<div style="position:absolute;left:718.90px;top:298.94px;font-size:12.6px;line-height:1;white-space:pre;color:#CC9933;transform:scaleX(1.0133);transform-origin:0 0;">M<span style="font-size:87%">y</span>R<span style="font-size:87%">eads</span></div>
<svg style="position:absolute;left:613.00px;top:329.50px;" width="21.40" height="23.70" viewBox="0 0 100 100" preserveAspectRatio="none"><path d="M0,0 C25,0 48,18 48,50 L49,52 C51,30 58,10 65.6,0 L67.7,22 L82.8,10.7 L85,32 L92,29 L100,27 L100,100 L0,100 Z" fill="#000"/></svg>
<div style="position:absolute;left:608.80px;top:356.77px;font-size:7.6px;line-height:1;white-space:pre;color:#000;transform:scaleX(1.0012);transform-origin:0 0;">M<span style="font-size:87%">y</span>R<span style="font-size:87%">eads</span></div>
<svg style="position:absolute;left:717.00px;top:328.30px;" width="21.40" height="23.70" viewBox="0 0 100 100" preserveAspectRatio="none"><path d="M0,0 C25,0 48,18 48,50 L49,52 C51,30 58,10 65.6,0 L67.7,22 L82.8,10.7 L85,32 L92,29 L100,27 L100,100 L0,100 Z" fill="#fff"/></svg>
<div style="position:absolute;left:713.00px;top:354.97px;font-size:7.6px;line-height:1;white-space:pre;color:#fff;transform:scaleX(0.9978);transform-origin:0 0;">M<span style="font-size:87%">y</span>R<span style="font-size:87%">eads</span></div>
<svg style="position:absolute;left:584.20px;top:374.60px;" width="24.20" height="26.90" viewBox="0 0 100 100" preserveAspectRatio="none"><path d="M0,0 C25,0 48,18 48,50 L49,52 C51,30 58,10 65.6,0 L67.7,22 L82.8,10.7 L85,32 L92,29 L100,27 L100,100 L0,100 Z" fill="#fff"/></svg>
<div style="position:absolute;left:614.60px;top:384.94px;font-size:12.6px;line-height:1;white-space:pre;color:#fff;transform:scaleX(0.9949);transform-origin:0 0;">M<span style="font-size:87%">y</span>R<span style="font-size:87%">eads</span></div>
<svg style="position:absolute;left:687.10px;top:375.00px;" width="24.90" height="26.50" viewBox="0 0 100 100" preserveAspectRatio="none"><path d="M0,0 C25,0 48,18 48,50 L49,52 C51,30 58,10 65.6,0 L67.7,22 L82.8,10.7 L85,32 L92,29 L100,27 L100,100 L0,100 Z" fill="#000"/></svg>
<div style="position:absolute;left:717.70px;top:384.94px;font-size:12.6px;line-height:1;white-space:pre;color:#000;transform:scaleX(0.9990);transform-origin:0 0;">M<span style="font-size:87%">y</span>R<span style="font-size:87%">eads</span></div>
<svg style="position:absolute;left:664.00px;top:422.40px;" width="28.60" height="31.40" viewBox="0 0 100 100" preserveAspectRatio="none"><path d="M0,0 C25,0 48,18 48,50 L49,52 C51,30 58,10 65.6,0 L67.7,22 L82.8,10.7 L85,32 L92,29 L100,27 L100,100 L0,100 Z" fill="#000"/></svg>
<svg style="position:absolute;left:723.00px;top:431.00px;" width="14.80" height="15.80" viewBox="0 0 100 100" preserveAspectRatio="none"><path d="M0,0 C25,0 48,18 48,50 L49,52 C51,30 58,10 65.6,0 L67.7,22 L82.8,10.7 L85,32 L92,29 L100,27 L100,100 L0,100 Z" fill="#000"/></svg>
<svg style="position:absolute;left:766.90px;top:435.20px;" width="7.40" height="8.40" viewBox="0 0 100 100" preserveAspectRatio="none"><path d="M0,0 C25,0 48,18 48,50 L49,52 C51,30 58,10 65.6,0 L67.7,22 L82.8,10.7 L85,32 L92,29 L100,27 L100,100 L0,100 Z" fill="#000"/></svg>
<svg style="position:absolute;left:573.80px;top:489.30px;" width="7.40" height="8.40" viewBox="0 0 100 100" preserveAspectRatio="none"><path d="M0,0 C25,0 48,18 50,50 L50,100 L0,100 Z" fill="#99CCCC"/><path d="M50,100 L50,50 C50,30 58,10 67,0 L67,100 Z" fill="#336666"/><path d="M67,25 C72,18 78,13 83,11 L83,100 L67,100 Z" fill="#669999"/><path d="M83,35 C88,31 94,29 100,29 L100,100 L83,100 Z" fill="#99CCCC"/></svg>
<svg style="position:absolute;left:615.80px;top:485.70px;" width="14.60" height="15.90" viewBox="0 0 100 100" preserveAspectRatio="none"><rect width="100" height="100" fill="#E6E6E6"/><path d="M0,0 C25,0 48,18 50,50 L50,100 L0,100 Z" fill="#99CCCC"/><path d="M50,100 L50,50 C50,30 58,10 67,0 L67,100 Z" fill="#336666"/><path d="M67,25 C72,18 78,13 83,11 L83,100 L67,100 Z" fill="#669999"/><path d="M83,35 C88,31 94,29 100,29 L100,100 L83,100 Z" fill="#99CCCC"/></svg>
<svg style="position:absolute;left:664.00px;top:479.30px;" width="28.60" height="31.60" viewBox="0 0 100 100" preserveAspectRatio="none"><rect width="100" height="100" fill="#E6E6E6"/><path d="M0,0 C25,0 48,18 50,50 L50,100 L0,100 Z" fill="#99CCCC"/><path d="M50,100 L50,50 C50,30 58,10 67,0 L67,100 Z" fill="#336666"/><path d="M67,25 C72,18 78,13 83,11 L83,100 L67,100 Z" fill="#669999"/><path d="M83,35 C88,31 94,29 100,29 L100,100 L83,100 Z" fill="#99CCCC"/></svg>
<div style="position:absolute;left:571px;top:519.4px;width:209px;height:52.6px;background:#000;"></div>
<svg style="position:absolute;left:664.00px;top:531.30px;" width="28.60" height="31.80" viewBox="0 0 100 100" preserveAspectRatio="none"><path d="M0,0 C25,0 48,18 48,50 L49,52 C51,30 58,10 65.6,0 L67.7,22 L82.8,10.7 L85,32 L92,29 L100,27 L100,100 L0,100 Z" fill="#fff"/></svg>
<svg style="position:absolute;left:723.00px;top:540.20px;" width="14.80" height="15.90" viewBox="0 0 100 100" preserveAspectRatio="none"><path d="M0,0 C25,0 48,18 48,50 L49,52 C51,30 58,10 65.6,0 L67.7,22 L82.8,10.7 L85,32 L92,29 L100,27 L100,100 L0,100 Z" fill="#fff"/></svg>
<svg style="position:absolute;left:767.00px;top:544.40px;" width="7.30" height="8.50" viewBox="0 0 100 100" preserveAspectRatio="none"><path d="M0,0 C25,0 48,18 48,50 L49,52 C51,30 58,10 65.6,0 L67.7,22 L82.8,10.7 L85,32 L92,29 L100,27 L100,100 L0,100 Z" fill="#fff"/></svg>
<svg style="position:absolute;left:570.75px;top:582.95px;" width="210.0" height="2" viewBox="0 0 210.0 2"><g fill="#2a2a2a"><rect x="0.00" y="0" width="1.5" height="1.5"/><rect x="5.68" y="0" width="1.5" height="1.5"/><rect x="11.36" y="0" width="1.5" height="1.5"/><rect x="17.04" y="0" width="1.5" height="1.5"/><rect x="22.72" y="0" width="1.5" height="1.5"/><rect x="28.40" y="0" width="1.5" height="1.5"/><rect x="34.08" y="0" width="1.5" height="1.5"/><rect x="39.76" y="0" width="1.5" height="1.5"/><rect x="45.44" y="0" width="1.5" height="1.5"/><rect x="51.12" y="0" width="1.5" height="1.5"/><rect x="56.80" y="0" width="1.5" height="1.5"/><rect x="62.48" y="0" width="1.5" height="1.5"/><rect x="68.16" y="0" width="1.5" height="1.5"/><rect x="73.84" y="0" width="1.5" height="1.5"/><rect x="79.52" y="0" width="1.5" height="1.5"/><rect x="85.20" y="0" width="1.5" height="1.5"/><rect x="90.88" y="0" width="1.5" height="1.5"/><rect x="96.56" y="0" width="1.5" height="1.5"/><rect x="102.24" y="0" width="1.5" height="1.5"/><rect x="107.92" y="0" width="1.5" height="1.5"/><rect x="113.60" y="0" width="1.5" height="1.5"/><rect x="119.28" y="0" width="1.5" height="1.5"/><rect x="124.96" y="0" width="1.5" height="1.5"/><rect x="130.64" y="0" width="1.5" height="1.5"/><rect x="136.32" y="0" width="1.5" height="1.5"/><rect x="142.00" y="0" width="1.5" height="1.5"/><rect x="147.68" y="0" width="1.5" height="1.5"/><rect x="153.36" y="0" width="1.5" height="1.5"/><rect x="159.04" y="0" width="1.5" height="1.5"/><rect x="164.72" y="0" width="1.5" height="1.5"/><rect x="170.40" y="0" width="1.5" height="1.5"/><rect x="176.08" y="0" width="1.5" height="1.5"/><rect x="181.76" y="0" width="1.5" height="1.5"/><rect x="187.44" y="0" width="1.5" height="1.5"/><rect x="193.12" y="0" width="1.5" height="1.5"/><rect x="198.80" y="0" width="1.5" height="1.5"/><rect x="204.48" y="0" width="1.5" height="1.5"/></g></svg>
<div style="position:absolute;left:832.80px;top:241.18px;font-size:8.3px;line-height:1;white-space:pre;color:#161616;transform:scaleX(0.9404);transform-origin:0 0;letter-spacing:-0.277px;">T<span style="font-size:87%">ypograp</span>h<span style="font-size:87%">y</span></div>
<div style="position:absolute;left:971.50px;top:257.06px;font-size:8.2px;line-height:1;white-space:pre;color:#161616;transform:scaleX(0.9169);transform-origin:0 0;letter-spacing:-0.380px;">F<span style="font-size:87%">u</span>t<span style="font-size:87%">ura</span> Bk BT</div>
<div style="position:absolute;left:971.50px;top:273.46px;font-size:8.2px;line-height:1;white-space:pre;color:#2a2a2a;font-weight:700;transform:scaleX(0.9206);transform-origin:0 0;letter-spacing:-0.396px;">F<span style="font-size:87%">u</span>t<span style="font-size:87%">ura</span> Md BT</div>
<div style="position:absolute;left:832.80px;top:288.37px;font-size:7.6px;line-height:1;white-space:pre;color:#161616;transform:scaleX(0.9305);transform-origin:0 0;letter-spacing:-0.401px;">ABCDEFGHIJKLMNOPQRSTUVWYZ</div>
<div style="position:absolute;left:832.80px;top:296.77px;font-size:7.6px;line-height:1;white-space:pre;color:#161616;transform:scaleX(1.0086);transform-origin:0 0;letter-spacing:0.030px;"><span style="font-size:87%">a</span>b<span style="font-size:87%">c</span>d<span style="font-size:87%">e</span>f<span style="font-size:87%">g</span>h<span style="font-size:87%">ij</span>kl<span style="font-size:87%">mnopqrs</span>t<span style="font-size:87%">uvwyz</span></div>
<div style="position:absolute;left:832.80px;top:305.17px;font-size:7.6px;line-height:1;white-space:pre;color:#161616;transform:scaleX(1.0014);transform-origin:0 0;letter-spacing:0.006px;">1234567890(!@#$%^&amp;*)</div>
<div style="position:absolute;left:832.80px;top:321.97px;font-size:7.6px;line-height:1;white-space:pre;color:#2a2a2a;font-weight:700;transform:scaleX(0.9324);transform-origin:0 0;letter-spacing:-0.395px;">ABCDEFGHIJKLMNOPQRSTUVWYZ</div>
<div style="position:absolute;left:832.80px;top:330.37px;font-size:7.6px;line-height:1;white-space:pre;color:#2a2a2a;font-weight:700;transform:scaleX(0.9783);transform-origin:0 0;letter-spacing:-0.085px;"><span style="font-size:87%">a</span>b<span style="font-size:87%">c</span>d<span style="font-size:87%">e</span>f<span style="font-size:87%">g</span>h<span style="font-size:87%">ij</span>kl<span style="font-size:87%">mnopqrs</span>t<span style="font-size:87%">uvwyz</span></div>
<div style="position:absolute;left:832.80px;top:338.77px;font-size:7.6px;line-height:1;white-space:pre;color:#2a2a2a;font-weight:700;transform:scaleX(1.0049);transform-origin:0 0;letter-spacing:0.022px;">1234567890(!@#$%^&amp;*)</div>
<svg style="position:absolute;left:832.25px;top:362.25px;" width="208" height="2" viewBox="0 0 208 2"><g fill="#2a2a2a"><rect x="0.00" y="0" width="1.5" height="1.5"/><rect x="5.68" y="0" width="1.5" height="1.5"/><rect x="11.36" y="0" width="1.5" height="1.5"/><rect x="17.04" y="0" width="1.5" height="1.5"/><rect x="22.72" y="0" width="1.5" height="1.5"/><rect x="28.40" y="0" width="1.5" height="1.5"/><rect x="34.08" y="0" width="1.5" height="1.5"/><rect x="39.76" y="0" width="1.5" height="1.5"/><rect x="45.44" y="0" width="1.5" height="1.5"/><rect x="51.12" y="0" width="1.5" height="1.5"/><rect x="56.80" y="0" width="1.5" height="1.5"/><rect x="62.48" y="0" width="1.5" height="1.5"/><rect x="68.16" y="0" width="1.5" height="1.5"/><rect x="73.84" y="0" width="1.5" height="1.5"/><rect x="79.52" y="0" width="1.5" height="1.5"/><rect x="85.20" y="0" width="1.5" height="1.5"/><rect x="90.88" y="0" width="1.5" height="1.5"/><rect x="96.56" y="0" width="1.5" height="1.5"/><rect x="102.24" y="0" width="1.5" height="1.5"/><rect x="107.92" y="0" width="1.5" height="1.5"/><rect x="113.60" y="0" width="1.5" height="1.5"/><rect x="119.28" y="0" width="1.5" height="1.5"/><rect x="124.96" y="0" width="1.5" height="1.5"/><rect x="130.64" y="0" width="1.5" height="1.5"/><rect x="136.32" y="0" width="1.5" height="1.5"/><rect x="142.00" y="0" width="1.5" height="1.5"/><rect x="147.68" y="0" width="1.5" height="1.5"/><rect x="153.36" y="0" width="1.5" height="1.5"/><rect x="159.04" y="0" width="1.5" height="1.5"/><rect x="164.72" y="0" width="1.5" height="1.5"/><rect x="170.40" y="0" width="1.5" height="1.5"/><rect x="176.08" y="0" width="1.5" height="1.5"/><rect x="181.76" y="0" width="1.5" height="1.5"/><rect x="187.44" y="0" width="1.5" height="1.5"/><rect x="193.12" y="0" width="1.5" height="1.5"/><rect x="198.80" y="0" width="1.5" height="1.5"/><rect x="204.48" y="0" width="1.5" height="1.5"/></g></svg>
<div style="position:absolute;left:832.80px;top:372.06px;font-size:8.2px;line-height:1;white-space:pre;color:#161616;transform:scaleX(0.9723);transform-origin:0 0;letter-spacing:-0.099px;">D<span style="font-size:87%">i</span>ff<span style="font-size:87%">eren</span>t S<span style="font-size:87%">izes</span></div>
<div style="position:absolute;left:856.70px;top:392.05px;font-size:6.8px;line-height:1;white-space:pre;color:#222;transform:scaleX(1.0289);transform-origin:0 0;letter-spacing:0.130px;">800px</div>
<div style="position:absolute;left:927.00px;top:410.25px;font-size:6.8px;line-height:1;white-space:pre;color:#222;transform:scaleX(1.0262);transform-origin:0 0;letter-spacing:0.118px;">400px</div>
<div style="position:absolute;left:979.00px;top:420.05px;font-size:6.8px;line-height:1;white-space:pre;color:#222;transform:scaleX(1.0397);transform-origin:0 0;letter-spacing:0.177px;">200px</div>
<div style="position:absolute;left:1018.00px;top:423.45px;font-size:6.8px;line-height:1;white-space:pre;color:#222;transform:scaleX(1.0127);transform-origin:0 0;letter-spacing:0.058px;">100px</div>
<svg style="position:absolute;left:840.00px;top:410.70px;" width="56.80" height="62.70" viewBox="0 0 100 100" preserveAspectRatio="none"><rect width="100" height="100" fill="#E6E6E6"/><path d="M0,0 C25,0 48,18 50,50 L50,100 L0,100 Z" fill="#99CCCC"/><path d="M50,100 L50,50 C50,30 58,10 67,0 L67,100 Z" fill="#336666"/><path d="M67,25 C72,18 78,13 83,11 L83,100 L67,100 Z" fill="#669999"/><path d="M83,35 C88,31 94,29 100,29 L100,100 L83,100 Z" fill="#99CCCC"/></svg>
<svg style="position:absolute;left:920.80px;top:426.70px;" width="28.40" height="30.90" viewBox="0 0 100 100" preserveAspectRatio="none"><rect width="100" height="100" fill="#E6E6E6"/><path d="M0,0 C25,0 48,18 50,50 L50,100 L0,100 Z" fill="#99CCCC"/><path d="M50,100 L50,50 C50,30 58,10 67,0 L67,100 Z" fill="#336666"/><path d="M67,25 C72,18 78,13 83,11 L83,100 L67,100 Z" fill="#669999"/><path d="M83,35 C88,31 94,29 100,29 L100,100 L83,100 Z" fill="#99CCCC"/></svg>
<svg style="position:absolute;left:982.60px;top:435.20px;" width="14.10" height="15.50" viewBox="0 0 100 100" preserveAspectRatio="none"><rect width="100" height="100" fill="#E6E6E6"/><path d="M0,0 C25,0 48,18 50,50 L50,100 L0,100 Z" fill="#99CCCC"/><path d="M50,100 L50,50 C50,30 58,10 67,0 L67,100 Z" fill="#336666"/><path d="M67,25 C72,18 78,13 83,11 L83,100 L67,100 Z" fill="#669999"/><path d="M83,35 C88,31 94,29 100,29 L100,100 L83,100 Z" fill="#99CCCC"/></svg>
<svg style="position:absolute;left:1025.80px;top:438.40px;" width="7.60" height="7.90" viewBox="0 0 100 100" preserveAspectRatio="none"><rect width="100" height="100" fill="#E6E6E6"/><path d="M0,0 C25,0 48,18 50,50 L50,100 L0,100 Z" fill="#99CCCC"/><path d="M50,100 L50,50 C50,30 58,10 67,0 L67,100 Z" fill="#336666"/><path d="M67,25 C72,18 78,13 83,11 L83,100 L67,100 Z" fill="#669999"/><path d="M83,35 C88,31 94,29 100,29 L100,100 L83,100 Z" fill="#99CCCC"/></svg>
<svg style="position:absolute;left:847.30px;top:491.90px;" width="42.50" height="46.90" viewBox="0 0 100 100" preserveAspectRatio="none"><rect width="100" height="100" fill="#E6E6E6"/><path d="M0,0 C25,0 48,18 50,50 L50,100 L0,100 Z" fill="#99CCCC"/><path d="M50,100 L50,50 C50,30 58,10 67,0 L67,100 Z" fill="#336666"/><path d="M67,25 C72,18 78,13 83,11 L83,100 L67,100 Z" fill="#669999"/><path d="M83,35 C88,31 94,29 100,29 L100,100 L83,100 Z" fill="#99CCCC"/></svg>
<div style="position:absolute;left:840.50px;top:544.59px;font-size:14.2px;line-height:1;white-space:pre;color:#66A3A3;transform:scaleX(1.0227);transform-origin:0 0;">M<span style="font-size:87%">y</span>R<span style="font-size:87%">eads</span></div>
<svg style="position:absolute;left:927.00px;top:503.90px;" width="21.30" height="23.10" viewBox="0 0 100 100" preserveAspectRatio="none"><rect width="100" height="100" fill="#E6E6E6"/><path d="M0,0 C25,0 48,18 50,50 L50,100 L0,100 Z" fill="#99CCCC"/><path d="M50,100 L50,50 C50,30 58,10 67,0 L67,100 Z" fill="#336666"/><path d="M67,25 C72,18 78,13 83,11 L83,100 L67,100 Z" fill="#669999"/><path d="M83,35 C88,31 94,29 100,29 L100,100 L83,100 Z" fill="#99CCCC"/></svg>
<div style="position:absolute;left:923.20px;top:529.91px;font-size:7.2px;line-height:1;white-space:pre;color:#66A3A3;transform:scaleX(1.0318);transform-origin:0 0;">M<span style="font-size:87%">y</span>R<span style="font-size:87%">eads</span></div>
<svg style="position:absolute;left:984.00px;top:509.60px;" width="11.00" height="11.80" viewBox="0 0 100 100" preserveAspectRatio="none"><rect width="100" height="100" fill="#E6E6E6"/><path d="M0,0 C25,0 48,18 50,50 L50,100 L0,100 Z" fill="#99CCCC"/><path d="M50,100 L50,50 C50,30 58,10 67,0 L67,100 Z" fill="#336666"/><path d="M67,25 C72,18 78,13 83,11 L83,100 L67,100 Z" fill="#669999"/><path d="M83,35 C88,31 94,29 100,29 L100,100 L83,100 Z" fill="#99CCCC"/></svg>
<div style="position:absolute;left:982.40px;top:523.35px;font-size:3.6px;line-height:1;white-space:pre;color:#66A3A3;transform:scaleX(0.9801);transform-origin:0 0;letter-spacing:-0.051px;-webkit-text-stroke:0.12px currentColor;">MyReads</div>
<svg style="position:absolute;left:1026.80px;top:512.60px;" width="5.90" height="6.10" viewBox="0 0 100 100" preserveAspectRatio="none"><rect width="100" height="100" fill="#E6E6E6"/><path d="M0,0 C25,0 48,18 50,50 L50,100 L0,100 Z" fill="#99CCCC"/><path d="M50,100 L50,50 C50,30 58,10 67,0 L67,100 Z" fill="#336666"/><path d="M67,25 C72,18 78,13 83,11 L83,100 L67,100 Z" fill="#669999"/><path d="M83,35 C88,31 94,29 100,29 L100,100 L83,100 Z" fill="#99CCCC"/></svg>
<div style="position:absolute;left:1025.60px;top:519.71px;font-size:2px;line-height:1;white-space:pre;color:#66A3A3;transform:scaleX(0.9972);transform-origin:0 0;letter-spacing:-0.004px;-webkit-text-stroke:0.12px currentColor;">MyReads</div>
</div></body></html>
